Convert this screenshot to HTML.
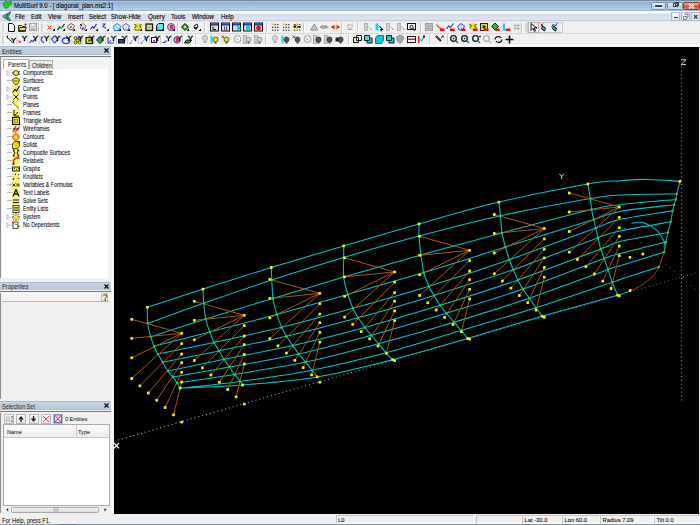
<!DOCTYPE html>
<html><head><meta charset="utf-8">
<style>
*{margin:0;padding:0;box-sizing:border-box}
html,body{width:700px;height:525px;overflow:hidden;background:#f0f0f0;font-family:"Liberation Sans",sans-serif;}
.mi,#ttxt{-webkit-text-stroke:0.12px #000}.ti,.sp{-webkit-text-stroke:0.06px #000}
.a{position:absolute}
#title{left:0;top:0;width:700px;height:10.5px;background:linear-gradient(#6f8aa6 0,#6f8aa6 0.8px,#a8c6e8 0.8px,#a8c6e8 1.6px,#91adcc 1.6px,#b4cfe9 9.5px,#98b5d5 10.5px);}
#ttxt{left:13.5px;top:1.2px;font-size:7.2px;color:#0c0c0c;white-space:nowrap;transform:scaleX(0.83);transform-origin:0 0}
#menu{left:0;top:10.5px;width:700px;height:10.5px;background:linear-gradient(#fff 0,#fff 1.5px,#e6eaf4 2.5px,#cfd9eb 4px,#d9e0f1 5px,#dfe4f3 9.5px,#c8ccd8 9.5px)}
.mi{position:absolute;top:12.7px;font-size:6.6px;color:#000;white-space:nowrap;transform:scaleX(0.93);transform-origin:0 0}
#tb{left:0;top:21px;width:700px;height:26px;background:#f0f0f0}
#view{left:114px;top:47px;width:585px;height:467px;background:#000}
.hdr{position:absolute;left:0;width:111px;height:8.8px;background:linear-gradient(#a8bacc 0,#a8bacc 0.8px,#c6d4e2 0.8px,#bccad8 7.6px,#a9bbce 8.8px);}
.htx{position:absolute;left:2px;top:1.6px;font-size:6.6px;color:#2a2a2a;white-space:nowrap;transform:scaleX(0.92);transform-origin:0 0}
.hx{position:absolute;left:104px;top:2px;width:5px;height:5px}
.ti{position:absolute;left:23px;font-size:6.3px;color:#000;white-space:nowrap;transform:scaleX(0.83);transform-origin:0 0;line-height:7px}
.ic{position:absolute;left:12px;width:8px;height:8px}
.ex{position:absolute;left:6.5px;width:0;height:0;border-left:2.5px solid #b8b8b8;border-top:2.5px solid transparent;border-bottom:2.5px solid transparent}
.dl{position:absolute;left:8px;width:4px;height:1px;border-top:1px dotted #a0a0a0}
.sp{position:absolute;top:515px;height:9px;border:1px solid #c4c4c4;border-right-color:#fafafa;border-bottom-color:#fafafa;font-size:5.8px;line-height:8px;padding-left:1.5px;color:#000;white-space:nowrap}
.btn{position:absolute;top:414px;width:10px;height:9.5px;background:linear-gradient(#fdfdfd,#e8e8e8);border:1px solid #b8b8b8}
</style></head><body>
<div class="a" id="title"></div>
<svg class="a" style="left:1px;top:0px" width="12" height="10"><path d="M2 3.5 L5 1 L7 2.5 L10 0.8 L10.5 4 L8 6.5 L5 8.8 L3.5 7 Z" fill="#18d018" stroke="#0a7a0a" stroke-width="0.7"/></svg>
<div class="a" id="ttxt">MultiSurf 9.0 - [ diagonal_plan.ms2:1]</div>
<!-- window buttons -->
<div class="a" style="left:650.5px;top:1.5px;width:15px;height:8px;border:0.8px solid #7890ac;border-radius:1.5px;background:linear-gradient(#e4eef8,#c8d8ea 50%,#b4c8de 51%,#d0e0f0)"></div>
<div class="a" style="left:655px;top:5.3px;width:6.5px;height:1.8px;background:#3c4450;box-shadow:0 0 0 0.6px #f4f8fc"></div>
<div class="a" style="left:666.5px;top:1.5px;width:16px;height:8px;border:0.8px solid #7890ac;border-radius:1.5px;background:linear-gradient(#e4eef8,#c8d8ea 50%,#b4c8de 51%,#d0e0f0)"></div>
<div class="a" style="left:672.5px;top:3px;width:5px;height:4px;border:1px solid #3c4450;border-top-width:1.5px"></div>
<div class="a" style="left:674.5px;top:2.2px;width:4px;height:3.5px;border:1px solid #3c4450;border-top-width:1.3px"></div>
<div class="a" style="left:683px;top:1.5px;width:17px;height:8px;border:0.8px solid #8a3a30;border-radius:1.5px;background:linear-gradient(#f0a898,#d86850 50%,#c84830 51%,#e08060)"></div>
<svg class="a" style="left:683px;top:1.5px" width="17" height="8"><path d="M6 2 L11 6.5 M11 2 L6 6.5" stroke="#fff" stroke-width="1.8"/><path d="M6 2 L11 6.5 M11 2 L6 6.5" stroke="#3a3a3a" stroke-width="0.6" opacity="0.5"/></svg>

<div class="a" id="menu"></div>
<svg class="a" style="left:2px;top:10.5px" width="10" height="11"><path d="M8.8 0.8 L2.5 4.2 L0.8 5.5 L2.5 6.8 L8.8 10.2 L6.2 5.5 Z" fill="#20e020" stroke="#5a2ab0" stroke-width="0.9"/><path d="M6 2.8 L4.2 5.5 L6 8.2" stroke="#1838d0" stroke-width="1" fill="none"/></svg>
<div class="mi" style="left:14.5px">File</div>
<div class="mi" style="left:31px">Edit</div>
<div class="mi" style="left:47.5px">View</div>
<div class="mi" style="left:67.5px">Insert</div>
<div class="mi" style="left:88.5px">Select</div>
<div class="mi" style="left:111px">Show-Hide</div>
<div class="mi" style="left:147.5px">Query</div>
<div class="mi" style="left:171px">Tools</div>
<div class="mi" style="left:192px">Window</div>
<div class="mi" style="left:221px">Help</div>
<!-- MDI buttons -->
<div class="a" style="left:671px;top:12px;width:9px;height:8.5px;border:0.8px solid #aab8cc;background:linear-gradient(#f6f8fc,#dfe6f2)"></div>
<div class="a" style="left:674px;top:17px;width:3.5px;height:1.2px;background:#333"></div>
<div class="a" style="left:681px;top:12px;width:9px;height:8.5px;border:0.8px solid #aab8cc;background:linear-gradient(#f6f8fc,#dfe6f2)"></div>
<svg class="a" style="left:681px;top:12px" width="9" height="9"><path d="M2.5 4.5h3v3h-3zM4 3v-1h3v3h-1" stroke="#666" stroke-width="0.8" fill="none"/></svg>
<div class="a" style="left:691px;top:12px;width:9px;height:8.5px;border:0.8px solid #aab8cc;background:linear-gradient(#f6f8fc,#dfe6f2)"></div>
<svg class="a" style="left:691px;top:12px" width="9" height="9"><path d="M3 3 L6.5 6.5 M6.5 3 L3 6.5" stroke="#333" stroke-width="1.1"/></svg>

<div class="a" id="tb"></div>
<svg class="a" style="left:0;top:0" width="700" height="47"><rect x="0.0" y="21.0" width="700.0" height="0.8" fill="#e4e8ee"/><rect x="0.0" y="33.0" width="700.0" height="1.0" fill="#d9d9d9"/><rect x="0.0" y="44.8" width="700.0" height="1.4" fill="#fdfdfd"/><rect x="2.5" y="23.5" width="1.2" height="8.0" fill="#b4b4b4"/><rect x="3.7" y="23.5" width="0.8" height="8.0" fill="#fcfcfc"/><rect x="41.5" y="23.5" width="1.2" height="8.0" fill="#b4b4b4"/><rect x="42.7" y="23.5" width="0.8" height="8.0" fill="#fcfcfc"/><rect x="2.5" y="35.5" width="1.2" height="9.0" fill="#b4b4b4"/><rect x="3.7" y="35.5" width="0.8" height="9.0" fill="#fcfcfc"/><rect x="525.5" y="23.5" width="1.2" height="8.0" fill="#b4b4b4"/><rect x="526.7" y="23.5" width="0.8" height="8.0" fill="#fcfcfc"/><rect x="38.0" y="22.5" width="1.0" height="10.0" fill="#c8c8c8"/><rect x="39.0" y="22.5" width="1.0" height="10.0" fill="#ffffff"/><rect x="177.0" y="22.5" width="1.0" height="10.0" fill="#c8c8c8"/><rect x="178.0" y="22.5" width="1.0" height="10.0" fill="#ffffff"/><rect x="204.0" y="22.5" width="1.0" height="10.0" fill="#c8c8c8"/><rect x="205.0" y="22.5" width="1.0" height="10.0" fill="#ffffff"/><rect x="266.0" y="22.5" width="1.0" height="10.0" fill="#c8c8c8"/><rect x="267.0" y="22.5" width="1.0" height="10.0" fill="#ffffff"/><rect x="303.0" y="22.5" width="1.0" height="10.0" fill="#c8c8c8"/><rect x="304.0" y="22.5" width="1.0" height="10.0" fill="#ffffff"/><rect x="341.0" y="22.5" width="1.0" height="10.0" fill="#c8c8c8"/><rect x="342.0" y="22.5" width="1.0" height="10.0" fill="#ffffff"/><rect x="357.0" y="22.5" width="1.0" height="10.0" fill="#c8c8c8"/><rect x="358.0" y="22.5" width="1.0" height="10.0" fill="#ffffff"/><rect x="420.0" y="22.5" width="1.0" height="10.0" fill="#c8c8c8"/><rect x="421.0" y="22.5" width="1.0" height="10.0" fill="#ffffff"/><rect x="521.0" y="22.5" width="1.0" height="10.0" fill="#c8c8c8"/><rect x="522.0" y="22.5" width="1.0" height="10.0" fill="#ffffff"/><rect x="527.5" y="22.5" width="35.0" height="10.0" fill="none" stroke="#c0c0c0" stroke-width="0.8"/><rect x="528.5" y="22.8" width="10.0" height="9.5" fill="#f8f8f8" stroke="#a0a0a0" stroke-width="0.7"/><path d="M8.5 23.5h4l2 2v6h-6z" stroke="#111" stroke-width="1" fill="#fff"/><path d="M18.5 25.5h3l1 1h3v5h-7z" stroke="#333" stroke-width="1" fill="#e8d040"/><path d="M18.5 30.5l1.5 -3h6.5l-1.5 3z" stroke="#333" stroke-width="1" fill="#f4e060"/><circle cx="25.5" cy="24.5" r="1.0" fill="#222"/><rect x="29.5" y="23.5" width="7.0" height="7.0" fill="#e4e4e4" stroke="#9a9a9a" stroke-width="1"/><rect x="31.0" y="23.8" width="4.0" height="2.5" fill="#fafafa" stroke="#a8a8a8" stroke-width="0.6"/><rect x="31.0" y="28.0" width="4.0" height="2.5" fill="#b8b8b8"/><path d="M47.5 25.5l4 4m0 -4l-4 4" stroke="#e02020" stroke-width="1" fill="none"/><path d="M52.5 31.0h2.5v-2.5z" stroke="none" stroke-width="1" fill="#000"/><path d="M57.5 30.0l2 -3l2 1l3 -4" stroke="#111" stroke-width="1.1" fill="none"/><circle cx="61.2" cy="27.8" r="1.2" fill="#20d020"/><path d="M62.5 31.0h2.5v-2.5z" stroke="none" stroke-width="1" fill="#000"/><path d="M67.5 26.0l3.5 -2.5l3.5 2l-2 4.5l-4 -1z" stroke="#555" stroke-width="0.9" fill="#f4f4f4"/><circle cx="70.8" cy="27.0" r="1.1" fill="#e02020"/><path d="M72.5 31.0h2.5v-2.5z" stroke="none" stroke-width="1" fill="#000"/><path d="M80.0 25.5l3 -2l3 2.5l-1.5 4l-3.5 -1z" stroke="#666" stroke-width="0.9" fill="#f0f0f0"/><path d="M80.0 24.0l2 2" stroke="#111" stroke-width="1" fill="none"/><circle cx="83.0" cy="28.0" r="1.2" fill="#e020e0"/><path d="M84.5 31.0h2.5v-2.5z" stroke="none" stroke-width="1" fill="#000"/><path d="M90.5 29.5l2 -3l1.5 1.5l2.5 -4" stroke="#2020e0" stroke-width="1.1" fill="none"/><path d="M95.5 31.0h2.5v-2.5z" stroke="none" stroke-width="1" fill="#000"/><path d="M102.5 24.0h2.5l-2 2.5l3 2" stroke="#2030d0" stroke-width="1.1" fill="none"/><path d="M104.5 25.0l2 2" stroke="#c0c040" stroke-width="0.8" fill="none"/><path d="M106.5 31.0h2.5v-2.5z" stroke="none" stroke-width="1" fill="#000"/><path d="M113.5 26.0l3.5 -2.5l3.5 2.5l-1 4l-5 1z" stroke="#2060ff" stroke-width="0.9" fill="#e0f4f8"/><path d="M115.0 25.0l4 4" stroke="#00c0e0" stroke-width="0.8" fill="none"/><path d="M118.5 31.0h2.5v-2.5z" stroke="none" stroke-width="1" fill="#000"/><path d="M122.5 26.0l3.5 -2.5l3.5 2.5l-1.5 4h-4z" stroke="#3040e0" stroke-width="0.9" fill="#f4f4fa"/><path d="M124.5 26.5l1.5 2l1.5 -2" stroke="#b0b0b0" stroke-width="0.6" fill="none"/><path d="M127.5 31.0h2.5v-2.5z" stroke="none" stroke-width="1" fill="#000"/><rect x="134.5" y="23.5" width="7.0" height="7.0" fill="#e8e020"/><path d="M134.5 24.0l2 2l-2 2m7 -4l-2 2l2 2M134.5 29.0l2 2m3 -2l-2 2" stroke="#222" stroke-width="0.9" fill="none"/><path d="M139.5 31.0h2.5v-2.5z" stroke="none" stroke-width="1" fill="#000"/><rect x="146.0" y="24.0" width="6.5" height="6.5" fill="#f0f000" stroke="#111" stroke-width="1.3"/><rect x="148.0" y="26.0" width="2.5" height="2.5" fill="#b0b0e0"/><path d="M150.5 31.0h2.5v-2.5z" stroke="none" stroke-width="1" fill="#000"/><path d="M156.5 25.5h5v5h-5z" stroke="#111" stroke-width="1" fill="#10d8e0"/><path d="M156.5 25.5l2 -2h5v5l-2 2" stroke="#111" stroke-width="1" fill="#60e8f0"/><path d="M161.5 31.0h2.5v-2.5z" stroke="none" stroke-width="1" fill="#000"/><circle cx="171.0" cy="27.0" r="3.5" fill="#e8a0c0" stroke="#3040d0" stroke-width="0.9"/><rect x="170.0" y="25.0" width="3.0" height="4.0" fill="#e03030"/><path d="M172.5 31.0h2.5v-2.5z" stroke="none" stroke-width="1" fill="#000"/><path d="M181.5 27.0l3.5 -3.5l3.5 3.5l-3.5 3.5z" stroke="#111" stroke-width="1" fill="#20c020"/><circle cx="185.0" cy="27.0" r="1.0" fill="#f0f0f0"/><path d="M186.5 31.0h2.5v-2.5z" stroke="none" stroke-width="1" fill="#000"/><path d="M194.0 26.0l3 -2l1 3l-3 2z" stroke="#111" stroke-width="1" fill="#fff"/><circle cx="196.0" cy="28.0" r="1.2" fill="#111"/><path d="M198.5 31.0h2.5v-2.5z" stroke="none" stroke-width="1" fill="#000"/><rect x="210.5" y="23.0" width="8.0" height="8.0" fill="#d8d8d8" stroke="#111" stroke-width="1"/><rect x="211.0" y="23.5" width="7.0" height="2.0" fill="#2040c0"/><path d="M213.0 26.5v3h3" stroke="#111" stroke-width="1" fill="none"/><rect x="221.5" y="23.0" width="8.0" height="8.0" fill="#d8d8d8" stroke="#111" stroke-width="1"/><rect x="222.0" y="23.5" width="7.0" height="2.0" fill="#2040c0"/><path d="M224.5 26.5v4m2 -4v4" stroke="#555" stroke-width="1" fill="none"/><rect x="232.5" y="23.0" width="8.0" height="8.0" fill="#d8d8d8" stroke="#111" stroke-width="1"/><rect x="233.0" y="23.5" width="7.0" height="2.0" fill="#2040c0"/><path d="M237.0 25.5l3 3h-2l1 2" stroke="#00c0e0" stroke-width="1.6" fill="none"/><rect x="243.5" y="23.0" width="8.0" height="8.0" fill="#d8d8d8" stroke="#111" stroke-width="1"/><rect x="244.0" y="23.5" width="7.0" height="2.0" fill="#2040c0"/><rect x="246.0" y="26.0" width="4.0" height="4.0" fill="#10d0e0"/><rect x="254.5" y="23.0" width="8.0" height="8.0" fill="#d8d8d8" stroke="#111" stroke-width="1"/><rect x="255.0" y="23.5" width="7.0" height="2.0" fill="#2040c0"/><circle cx="258.5" cy="28.0" r="2.4" fill="#e01010"/><rect x="272.0" y="24.0" width="1.2" height="1.2" fill="#e0d020"/><rect x="274.6" y="24.0" width="1.2" height="1.2" fill="#222"/><rect x="277.2" y="24.0" width="1.2" height="1.2" fill="#222"/><rect x="272.0" y="26.8" width="1.2" height="1.2" fill="#222"/><rect x="274.6" y="26.8" width="1.2" height="1.2" fill="#222"/><rect x="277.2" y="26.8" width="1.2" height="1.2" fill="#222"/><rect x="272.0" y="29.6" width="1.2" height="1.2" fill="#222"/><rect x="274.6" y="29.6" width="1.2" height="1.2" fill="#222"/><rect x="277.2" y="29.6" width="1.2" height="1.2" fill="#222"/><rect x="271.5" y="23.5" width="2.0" height="2.0" fill="#e0d020"/><rect x="283.0" y="24.0" width="1.2" height="1.2" fill="#e0d020"/><rect x="285.6" y="24.0" width="1.2" height="1.2" fill="#222"/><rect x="288.2" y="24.0" width="1.2" height="1.2" fill="#222"/><rect x="283.0" y="26.8" width="1.2" height="1.2" fill="#222"/><rect x="285.6" y="26.8" width="1.2" height="1.2" fill="#222"/><rect x="288.2" y="26.8" width="1.2" height="1.2" fill="#222"/><rect x="283.0" y="29.6" width="1.2" height="1.2" fill="#222"/><rect x="285.6" y="29.6" width="1.2" height="1.2" fill="#222"/><rect x="288.2" y="29.6" width="1.2" height="1.2" fill="#222"/><rect x="282.5" y="23.5" width="2.0" height="2.0" fill="#e0d020"/><rect x="294.0" y="24.0" width="1.2" height="1.2" fill="#333"/><rect x="296.6" y="24.0" width="1.2" height="1.2" fill="#333"/><rect x="299.2" y="24.0" width="1.2" height="1.2" fill="#333"/><rect x="294.0" y="26.8" width="1.2" height="1.2" fill="#333"/><rect x="296.6" y="26.8" width="1.2" height="1.2" fill="#333"/><rect x="299.2" y="26.8" width="1.2" height="1.2" fill="#333"/><rect x="294.0" y="29.6" width="1.2" height="1.2" fill="#333"/><rect x="296.6" y="29.6" width="1.2" height="1.2" fill="#333"/><rect x="299.2" y="29.6" width="1.2" height="1.2" fill="#333"/><rect x="293.5" y="26.0" width="7.0" height="1.5" fill="#111"/><rect x="296.0" y="23.5" width="1.5" height="7.0" fill="#e0d020"/><rect x="293.5" y="24.0" width="2.5" height="2.0" fill="#f04020"/><path d="M310.5 30.0l4 -6l3 6z" stroke="#888" stroke-width="1" fill="#c8c8c8"/><path d="M320.5 27.0h8m-8 0l2.5 -2m-2.5 2l2.5 2m1 -4v4m2 -4v4" stroke="#888" stroke-width="1" fill="none"/><path d="M331.5 27.0h8" stroke="#e02020" stroke-width="1.5" fill="none"/><path d="M331.5 27.0l3 -2.5v5z M339.5 27.0l-3 -2.5v5z" stroke="none" stroke-width="1" fill="#e02020"/><circle cx="335.5" cy="27.0" r="1.3" fill="#e8e020"/><path d="M347.0 25.0h6M347.0 26.0l3 3l3 -3M347.0 29.5h6" stroke="#aaa" stroke-width="0.9" fill="none"/><rect x="364.5" y="23.5" width="3.0" height="7.0" fill="#d0d0d0" stroke="#aaa" stroke-width="0.8"/><path d="M368.5 26.5l3 3h-1.5" stroke="#aaa" stroke-width="1" fill="none"/><rect x="375.5" y="23.5" width="3.0" height="7.0" fill="#10d8e0"/><path d="M379.5 26.0l3 3.5h-1.8l1 1.8" stroke="#111" stroke-width="1.1" fill="none"/><rect x="386.5" y="23.5" width="3.0" height="7.0" fill="#d0d0d0" stroke="#aaa" stroke-width="0.8"/><path d="M390.5 26.5l3 3h-1.5" stroke="#aaa" stroke-width="1" fill="none"/><rect x="397.5" y="23.5" width="3.0" height="7.0" fill="#d0d0d0" stroke="#aaa" stroke-width="0.8"/><path d="M401.5 26.5l3 3h-1.5" stroke="#aaa" stroke-width="1" fill="none"/><rect x="407.5" y="23.5" width="8.0" height="6.0" fill="#fff" stroke="#111" stroke-width="1"/><circle cx="411.5" cy="27.0" r="1.6" fill="none" stroke="#111" stroke-width="1"/><path d="M413.0 28.5l2 2" stroke="#111" stroke-width="1.2" fill="none"/><rect x="425.5" y="23.5" width="7.0" height="7.0" fill="#c8c8c8" stroke="#a0a0a0" stroke-width="1"/><path d="M425.5 26.0h7M425.5 28.5h7M428.0 23.5v7M430.5 23.5v7" stroke="#999" stroke-width="0.6" fill="none"/><path d="M436.5 24.5l3 3.5l2 0.5" stroke="#e02020" stroke-width="1.1" fill="none"/><rect x="440.0" y="28.5" width="4.5" height="2.5" fill="#f01010"/><path d="M446.5 29.0l2 -3l2 1.5l3 -4" stroke="#2030e0" stroke-width="1.1" fill="none"/><rect x="450.0" y="28.5" width="4.5" height="2.5" fill="#f01010"/><path d="M457.5 26.5l3.5 -3l3.5 2.5l-1.5 4h-4z" stroke="#3040e0" stroke-width="1" fill="#d8d8f0"/><rect x="461.0" y="28.5" width="4.5" height="2.5" fill="#f01010"/><rect x="469.5" y="23.5" width="7.0" height="6.5" fill="#e8e020"/><path d="M469.5 24.0l2 2l-2 2m7 -4l-2 2l2 2" stroke="#222" stroke-width="0.9" fill="none"/><rect x="473.0" y="28.5" width="4.5" height="2.5" fill="#f01010"/><rect x="480.5" y="23.5" width="7.0" height="7.0" fill="#e8e020" stroke="#222" stroke-width="1"/><rect x="482.5" y="25.5" width="3.0" height="3.0" fill="#222"/><rect x="484.0" y="28.5" width="4.5" height="2.5" fill="#f01010"/><path d="M491.5 26.5l3.5 -3.5l3.5 3.5l-3.5 3.5z" stroke="#111" stroke-width="1" fill="#20c020"/><rect x="495.0" y="28.5" width="4.5" height="2.5" fill="#f01010"/><rect x="503.0" y="23.5" width="2.0" height="7.0" fill="#10d0e0"/><rect x="503.0" y="29.0" width="4.0" height="1.5" fill="#10d0e0"/><rect x="506.0" y="28.5" width="4.5" height="2.5" fill="#f01010"/><path d="M515.0 23.5v7m3 -7v7M513.5 25.5h7m-7 3h7" stroke="#b0b0b0" stroke-width="1" fill="none"/><path d="M531.0 23.5v7l2 -2l1.5 3l1 -0.5l-1.5 -3h3z" stroke="#111" stroke-width="1" fill="#fff"/><path d="M540.5 23.5l3 3m0 -3l-3 3" stroke="#e02020" stroke-width="1" fill="none"/><path d="M542.5 26.0l3 2l-1 3l-3 -2z" stroke="#111" stroke-width="1" fill="#20c0c0"/><path d="M551.5 27.0l2 -3l2 2l2 -3" stroke="#2020e0" stroke-width="1" fill="none"/><path d="M553.5 26.0l3 2l-1 3l-3 -2z" stroke="#111" stroke-width="1" fill="#20c0c0"/><rect x="5.0" y="34.5" width="190.0" height="10.5" fill="#f6f6f6"/><rect x="16.5" y="35.0" width="1.0" height="9.5" fill="#c8c8c8"/><rect x="27.5" y="35.0" width="1.0" height="9.5" fill="#c8c8c8"/><rect x="38.6" y="35.0" width="1.0" height="9.5" fill="#c8c8c8"/><rect x="49.5" y="35.0" width="1.0" height="9.5" fill="#c8c8c8"/><rect x="60.5" y="35.0" width="1.0" height="9.5" fill="#c8c8c8"/><rect x="71.4" y="35.0" width="1.0" height="9.5" fill="#c8c8c8"/><rect x="82.3" y="35.0" width="1.0" height="9.5" fill="#c8c8c8"/><rect x="93.7" y="35.0" width="1.0" height="9.5" fill="#c8c8c8"/><rect x="105.0" y="35.0" width="1.0" height="9.5" fill="#c8c8c8"/><rect x="116.0" y="35.0" width="1.0" height="9.5" fill="#c8c8c8"/><rect x="127.0" y="35.0" width="1.0" height="9.5" fill="#c8c8c8"/><rect x="138.0" y="35.0" width="1.0" height="9.5" fill="#c8c8c8"/><rect x="149.0" y="35.0" width="1.0" height="9.5" fill="#c8c8c8"/><rect x="160.0" y="35.0" width="1.0" height="9.5" fill="#c8c8c8"/><rect x="171.0" y="35.0" width="1.0" height="9.5" fill="#c8c8c8"/><rect x="182.0" y="35.0" width="1.0" height="9.5" fill="#c8c8c8"/><rect x="195.0" y="34.5" width="1.0" height="10.0" fill="#c8c8c8"/><rect x="196.0" y="34.5" width="1.0" height="10.0" fill="#ffffff"/><rect x="265.0" y="34.5" width="1.0" height="10.0" fill="#c8c8c8"/><rect x="266.0" y="34.5" width="1.0" height="10.0" fill="#ffffff"/><rect x="348.0" y="34.5" width="1.0" height="10.0" fill="#c8c8c8"/><rect x="349.0" y="34.5" width="1.0" height="10.0" fill="#ffffff"/><rect x="429.0" y="34.5" width="1.0" height="10.0" fill="#c8c8c8"/><rect x="430.0" y="34.5" width="1.0" height="10.0" fill="#ffffff"/><rect x="447.0" y="34.5" width="1.0" height="10.0" fill="#c8c8c8"/><rect x="448.0" y="34.5" width="1.0" height="10.0" fill="#ffffff"/><path d="M7.5 35.5v3M6.5 36.5l6 6" stroke="#222" stroke-width="1" fill="none"/><path d="M10.5 37.8h1.6l1.4 2l1.4 -2h1.6l-2.3 3v2.5h-1.4v-2.5z" stroke="none" stroke-width="1" fill="#111"/><path d="M11.2 38.2l1.3 1.8" stroke="#2070f0" stroke-width="1" fill="none"/><path d="M18.5 40.5l2.5 2.5m0 -2.5l-2.5 2.5" stroke="#e02020" stroke-width="1" fill="none"/><path d="M21.5 35.8h1.6l1.4 2l1.4 -2h1.6l-2.3 3v2.5h-1.4v-2.5z" stroke="none" stroke-width="1" fill="#111"/><path d="M22.2 36.2l1.3 1.8" stroke="#2070f0" stroke-width="1" fill="none"/><path d="M29.5 43.0l2 -2.5l1.5 1l2.5 -3" stroke="#2040e0" stroke-width="1.2" fill="none"/><path d="M32.5 35.8h1.6l1.4 2l1.4 -2h1.6l-2.3 3v2.5h-1.4v-2.5z" stroke="none" stroke-width="1" fill="#111"/><path d="M33.2 36.2l1.3 1.8" stroke="#2070f0" stroke-width="1" fill="none"/><path d="M40.5 37.0h2l-1.5 3l3 3" stroke="#3040e0" stroke-width="1.2" fill="none"/><path d="M43.5 35.8h1.6l1.4 2l1.4 -2h1.6l-2.3 3v2.5h-1.4v-2.5z" stroke="none" stroke-width="1" fill="#111"/><path d="M44.2 36.2l1.3 1.8" stroke="#2070f0" stroke-width="1" fill="none"/><path d="M51.5 39.0l3 -3l2 1l1 3l-3 3z" stroke="#3040e0" stroke-width="1.1" fill="none"/><path d="M54.5 35.8h1.6l1.4 2l1.4 -2h1.6l-2.3 3v2.5h-1.4v-2.5z" stroke="none" stroke-width="1" fill="#111"/><path d="M55.2 36.2l1.3 1.8" stroke="#2070f0" stroke-width="1" fill="none"/><ellipse cx="66.0" cy="40.8" rx="3.6" ry="2.8" fill="#fff" stroke="#2040f0" stroke-width="1.3"/><path d="M65.5 35.8h1.6l1.4 2l1.4 -2h1.6l-2.3 3v2.5h-1.4v-2.5z" stroke="none" stroke-width="1" fill="#111"/><path d="M66.2 36.2l1.3 1.8" stroke="#2070f0" stroke-width="1" fill="none"/><circle cx="75.5" cy="38.0" r="1.5" fill="#f0f000" stroke="#111" stroke-width="0.7"/><circle cx="79.5" cy="38.0" r="1.5" fill="#f0f000" stroke="#111" stroke-width="0.7"/><circle cx="77.5" cy="40.5" r="1.5" fill="#f0f000" stroke="#111" stroke-width="0.7"/><circle cx="75.5" cy="42.5" r="1.5" fill="#f0f000" stroke="#111" stroke-width="0.7"/><circle cx="79.5" cy="42.5" r="1.5" fill="#f0f000" stroke="#111" stroke-width="0.7"/><path d="M77.5 35.8h1.6l1.4 2l1.4 -2h1.6l-2.3 3v2.5h-1.4v-2.5z" stroke="none" stroke-width="1" fill="#111"/><path d="M78.2 36.2l1.3 1.8" stroke="#2070f0" stroke-width="1" fill="none"/><rect x="86.0" y="37.5" width="6.5" height="6.0" fill="#f0f000" stroke="#111" stroke-width="1.2"/><rect x="88.0" y="39.5" width="2.5" height="2.0" fill="#2050c0"/><path d="M88.5 35.8h1.6l1.4 2l1.4 -2h1.6l-2.3 3v2.5h-1.4v-2.5z" stroke="none" stroke-width="1" fill="#111"/><path d="M89.2 36.2l1.3 1.8" stroke="#2070f0" stroke-width="1" fill="none"/><path d="M96.5 40.0l3.5 -3.5l3.5 3.5l-3.5 3.5z" stroke="#111" stroke-width="1" fill="#20c020"/><path d="M99.5 35.8h1.6l1.4 2l1.4 -2h1.6l-2.3 3v2.5h-1.4v-2.5z" stroke="none" stroke-width="1" fill="#111"/><path d="M100.2 36.2l1.3 1.8" stroke="#2070f0" stroke-width="1" fill="none"/><path d="M108.0 37.0v6h6" stroke="#2040e0" stroke-width="1.1" fill="none"/><path d="M108.0 43.0l3 -3" stroke="#2040e0" stroke-width="1" fill="none"/><path d="M110.5 35.8h1.6l1.4 2l1.4 -2h1.6l-2.3 3v2.5h-1.4v-2.5z" stroke="none" stroke-width="1" fill="#111"/><path d="M111.2 36.2l1.3 1.8" stroke="#2070f0" stroke-width="1" fill="none"/><rect x="118.5" y="39.5" width="6.0" height="3.5" fill="#444" stroke="#111" stroke-width="1"/><rect x="119.5" y="40.5" width="4.0" height="1.5" fill="#2040e0"/><path d="M121.5 35.8h1.6l1.4 2l1.4 -2h1.6l-2.3 3v2.5h-1.4v-2.5z" stroke="none" stroke-width="1" fill="#111"/><path d="M122.2 36.2l1.3 1.8" stroke="#2070f0" stroke-width="1" fill="none"/><path d="M129.5 43.0h2M131.5 41.0h1M133.0 39.0h2" stroke="#2040e0" stroke-width="1.2" fill="none"/><path d="M132.5 35.8h1.6l1.4 2l1.4 -2h1.6l-2.3 3v2.5h-1.4v-2.5z" stroke="none" stroke-width="1" fill="#111"/><path d="M133.2 36.2l1.3 1.8" stroke="#2070f0" stroke-width="1" fill="none"/><path d="M140.5 43.0h2M142.5 41.0h1M144.0 39.0h2" stroke="#2040e0" stroke-width="1.2" fill="none"/><path d="M143.5 35.8h1.6l1.4 2l1.4 -2h1.6l-2.3 3v2.5h-1.4v-2.5z" stroke="none" stroke-width="1" fill="#111"/><path d="M144.2 36.2l1.3 1.8" stroke="#2070f0" stroke-width="1" fill="none"/><rect x="151.5" y="37.5" width="5.0" height="5.0" fill="#fff" stroke="#111" stroke-width="1"/><rect x="153.0" y="40.0" width="2.0" height="2.5" fill="#e020e0"/><path d="M154.5 35.8h1.6l1.4 2l1.4 -2h1.6l-2.3 3v2.5h-1.4v-2.5z" stroke="none" stroke-width="1" fill="#111"/><path d="M155.2 36.2l1.3 1.8" stroke="#2070f0" stroke-width="1" fill="none"/><path d="M162.5 42.5h2l2 -2" stroke="#2040e0" stroke-width="1.2" fill="none"/><path d="M165.5 35.8h1.6l1.4 2l1.4 -2h1.6l-2.3 3v2.5h-1.4v-2.5z" stroke="none" stroke-width="1" fill="#111"/><path d="M166.2 36.2l1.3 1.8" stroke="#2070f0" stroke-width="1" fill="none"/><circle cx="177.0" cy="40.0" r="3.2" fill="#e890b0" stroke="#3040d0" stroke-width="1"/><rect x="176.0" y="38.0" width="2.5" height="4.0" fill="#e03030"/><path d="M176.5 35.8h1.6l1.4 2l1.4 -2h1.6l-2.3 3v2.5h-1.4v-2.5z" stroke="none" stroke-width="1" fill="#111"/><path d="M177.2 36.2l1.3 1.8" stroke="#2070f0" stroke-width="1" fill="none"/><path d="M184.5 43.0l2 -3h5l-2 3z" stroke="#111" stroke-width="1" fill="#20c020"/><path d="M187.5 35.8h1.6l1.4 2l1.4 -2h1.6l-2.3 3v2.5h-1.4v-2.5z" stroke="none" stroke-width="1" fill="#111"/><path d="M188.2 36.2l1.3 1.8" stroke="#2070f0" stroke-width="1" fill="none"/><path d="M205.0 35.5c-3 0 -3 4 -1 5v2h2v-2c2 -1 2 -5 -1 -5z" stroke="#999" stroke-width="0.9" fill="#d8d8d8"/><rect x="210.5" y="35.5" width="2.0" height="8.0" fill="#20d8e0"/><circle cx="215.5" cy="39.5" r="2.5" fill="#e8e020" stroke="#333" stroke-width="0.8"/><rect x="214.6" y="42.0" width="1.8" height="1.5" fill="#333"/><path d="M221.5 35.5l2.5 2.5m0 -2.5l-2.5 2.5" stroke="#e02020" stroke-width="1" fill="none"/><circle cx="226.5" cy="39.5" r="2.5" fill="#e8e020" stroke="#333" stroke-width="0.8"/><rect x="225.6" y="42.0" width="1.8" height="1.5" fill="#333"/><circle cx="237.5" cy="39.0" r="3.5" fill="none" stroke="#a0a0a0" stroke-width="1"/><path d="M236.0 38.0l2 2" stroke="#a0a0a0" stroke-width="1" fill="none"/><rect x="243.5" y="35.5" width="3.0" height="8.0" fill="#d0d0d0" stroke="#a0a0a0" stroke-width="0.8"/><circle cx="248.5" cy="39.5" r="2.5" fill="#d0d0d0" stroke="#888" stroke-width="0.8"/><rect x="247.6" y="42.0" width="1.8" height="1.5" fill="#333"/><rect x="254.5" y="35.5" width="3.0" height="8.0" fill="#d0d0d0" stroke="#a0a0a0" stroke-width="0.8"/><circle cx="259.5" cy="39.5" r="2.5" fill="#d0d0d0" stroke="#888" stroke-width="0.8"/><rect x="258.6" y="42.0" width="1.8" height="1.5" fill="#333"/><path d="M275.0 35.5c-3 0 -3 4 -1 5v2h2v-2c2 -1 2 -5 -1 -5z" stroke="#999" stroke-width="0.9" fill="#d8d8d8"/><rect x="281.5" y="35.5" width="2.0" height="8.0" fill="#20d8e0"/><circle cx="286.5" cy="39.5" r="2.5" fill="#555" stroke="#333" stroke-width="0.8"/><rect x="285.6" y="42.0" width="1.8" height="1.5" fill="#333"/><path d="M292.5 35.5l2.5 2.5m0 -2.5l-2.5 2.5" stroke="#e02020" stroke-width="1" fill="none"/><circle cx="297.5" cy="39.5" r="2.5" fill="#555" stroke="#333" stroke-width="0.8"/><rect x="296.6" y="42.0" width="1.8" height="1.5" fill="#333"/><circle cx="307.5" cy="39.0" r="3.5" fill="none" stroke="#a0a0a0" stroke-width="1"/><path d="M306.0 38.0l2 2" stroke="#a0a0a0" stroke-width="1" fill="none"/><rect x="313.5" y="35.5" width="3.0" height="8.0" fill="#d0d0d0" stroke="#a0a0a0" stroke-width="0.8"/><circle cx="318.5" cy="39.5" r="2.5" fill="#555" stroke="#222" stroke-width="0.8"/><rect x="317.6" y="42.0" width="1.8" height="1.5" fill="#333"/><rect x="324.5" y="35.5" width="3.0" height="8.0" fill="#d0d0d0" stroke="#a0a0a0" stroke-width="0.8"/><circle cx="329.5" cy="39.5" r="2.5" fill="#555" stroke="#222" stroke-width="0.8"/><rect x="328.6" y="42.0" width="1.8" height="1.5" fill="#333"/><rect x="335.5" y="37.5" width="3.0" height="4.0" fill="#222"/><circle cx="340.5" cy="39.5" r="2.5" fill="#555" stroke="#111" stroke-width="0.8"/><rect x="339.6" y="42.0" width="1.8" height="1.5" fill="#333"/><path d="M353.5 37.5h5v5h-5zM356.5 35.5h5v5h-5z" stroke="#111" stroke-width="1" fill="none"/><path d="M367.0 38.0h5v5h-5z" stroke="#111" stroke-width="1" fill="#10d8e0"/><path d="M364.5 35.5h5v5h-5z" stroke="#111" stroke-width="1" fill="#40e0e8"/><path d="M375.5 38.0l2 -2.5h6v5l-2 3h-6z" stroke="#008890" stroke-width="1" fill="#10c8d0"/><path d="M389.0 38.0h5v5h-5z" stroke="#111" stroke-width="1" fill="#10d8e0"/><path d="M386.5 35.5h5v5h-5z" stroke="#111" stroke-width="1" fill="#10d8e0"/><path d="M396.5 37.0l3.5 -2l3.5 2l-1 4l-2.5 2.5l-2.5 -2.5z" stroke="#888" stroke-width="1" fill="#a8a8a8"/><rect x="407.5" y="36.5" width="8.0" height="6.0" fill="#fff" stroke="#111" stroke-width="1"/><rect x="408.0" y="38.5" width="7.0" height="1.5" fill="#e02020"/><rect x="418.0" y="36.0" width="1.5" height="7.0" fill="#e02020"/><path d="M419.0 39.0l2.5 2l2.5 -4" stroke="#10d0e0" stroke-width="1.5" fill="none"/><rect x="423.0" y="35.5" width="2.0" height="2.0" fill="#111"/><path d="M436.0 36.0l5 5" stroke="#111" stroke-width="2" fill="none"/><path d="M436.5 36.0l4 4" stroke="#10a0e0" stroke-width="1" fill="none"/><path d="M441.0 38.0l2 -2m-1 0h1.5v1.5" stroke="#111" stroke-width="0.8" fill="none"/><circle cx="453.5" cy="38.5" r="2.8" fill="#fff" stroke="#111" stroke-width="1.3"/><path d="M455.5 40.5l2.5 2.5" stroke="#1080c0" stroke-width="1.6" fill="none"/><circle cx="453.5" cy="38.5" r="1.0" fill="#333"/><circle cx="464.5" cy="38.5" r="2.8" fill="#fff" stroke="#111" stroke-width="1.3"/><path d="M466.5 40.5l2.5 2.5" stroke="#1080c0" stroke-width="1.6" fill="none"/><circle cx="464.5" cy="38.5" r="1.0" fill="#333"/><circle cx="475.5" cy="38.5" r="2.8" fill="#fff" stroke="#111" stroke-width="1.3"/><path d="M477.5 40.5l2.5 2.5" stroke="#1080c0" stroke-width="1.6" fill="none"/><path d="M479.0 36.5h2m-1 -1v2" stroke="#111" stroke-width="0.8" fill="none"/><circle cx="486.5" cy="38.5" r="2.8" fill="#f4f4f4" stroke="#b0b0b0" stroke-width="1.3"/><path d="M488.5 40.5l2.5 2.5" stroke="#bbb" stroke-width="1.6" fill="none"/><path d="M495.0 39.5a3.3 3.3 0 0 1 6 -1.5M502.0 39.5a3.3 3.3 0 0 1 -6 1.5" stroke="#111" stroke-width="1.3" fill="none"/><path d="M509.5 35.5v8M505.5 39.5h8" stroke="#111" stroke-width="1.6" fill="none"/></svg>
<div class="a" id="view"></div>
<div class="a" style="left:699px;top:47px;width:1px;height:467px;background:#e8e8e8"></div>
<div class="a" style="left:111px;top:46px;width:3px;height:468px;background:#f4f4f4"></div>
<svg class="a" style="left:0;top:0" width="700" height="525" viewBox="0 0 700 525"><rect x="118.1" y="439.4" width="1" height="1" fill="#d7d7d7"/><rect x="121.9" y="438.3" width="1" height="1" fill="#d6d6d6"/><rect x="125.7" y="437.2" width="1" height="1" fill="#d5d5d5"/><rect x="129.6" y="436.1" width="1" height="1" fill="#d4d4d4"/><rect x="133.4" y="435.0" width="1" height="1" fill="#d3d3d3"/><rect x="137.2" y="433.9" width="1" height="1" fill="#d3d2d2"/><rect x="141.0" y="432.8" width="1" height="1" fill="#d2d1d1"/><rect x="144.8" y="431.7" width="1" height="1" fill="#d1d0d0"/><rect x="148.6" y="430.6" width="1" height="1" fill="#d0cfcf"/><rect x="152.5" y="429.5" width="1" height="1" fill="#cfcece"/><rect x="156.3" y="428.4" width="1" height="1" fill="#cfcdcd"/><rect x="160.1" y="427.3" width="1" height="1" fill="#cecccc"/><rect x="163.9" y="426.2" width="1" height="1" fill="#cdcbcb"/><rect x="167.7" y="425.0" width="1" height="1" fill="#cccaca"/><rect x="171.5" y="423.9" width="1" height="1" fill="#cbc9c9"/><rect x="175.4" y="422.8" width="1" height="1" fill="#cbc8c8"/><rect x="179.2" y="421.7" width="1" height="1" fill="#cac7c7"/><rect x="183.0" y="420.6" width="1" height="1" fill="#c9c6c6"/><rect x="186.8" y="419.5" width="1" height="1" fill="#c8c5c5"/><rect x="190.6" y="418.4" width="1" height="1" fill="#c7c5c5"/><rect x="194.4" y="417.3" width="1" height="1" fill="#c7c4c4"/><rect x="198.3" y="416.2" width="1" height="1" fill="#c6c3c3"/><rect x="202.1" y="415.1" width="1" height="1" fill="#c5c2c2"/><rect x="205.9" y="414.0" width="1" height="1" fill="#c4c1c1"/><rect x="209.7" y="412.9" width="1" height="1" fill="#c3c0c0"/><rect x="213.5" y="411.8" width="1" height="1" fill="#c3bfbf"/><rect x="217.3" y="410.7" width="1" height="1" fill="#c2bebe"/><rect x="221.2" y="409.6" width="1" height="1" fill="#c1bdbd"/><rect x="225.0" y="408.5" width="1" height="1" fill="#c0bcbc"/><rect x="228.8" y="407.4" width="1" height="1" fill="#bfbbbb"/><rect x="232.6" y="406.3" width="1" height="1" fill="#bfbaba"/><rect x="236.4" y="405.2" width="1" height="1" fill="#beb9b9"/><rect x="240.3" y="404.1" width="1" height="1" fill="#bdb8b8"/><rect x="244.1" y="403.0" width="1" height="1" fill="#bcb7b7"/><rect x="247.9" y="401.9" width="1" height="1" fill="#bbb6b6"/><rect x="251.7" y="400.8" width="1" height="1" fill="#bbb5b5"/><rect x="255.5" y="399.7" width="1" height="1" fill="#bab4b4"/><rect x="259.3" y="398.6" width="1" height="1" fill="#b9b4b4"/><rect x="263.2" y="397.4" width="1" height="1" fill="#b8b3b3"/><rect x="267.0" y="396.3" width="1" height="1" fill="#b8b2b2"/><rect x="270.8" y="395.2" width="1" height="1" fill="#b7b1b1"/><rect x="274.6" y="394.1" width="1" height="1" fill="#b6b0b0"/><rect x="278.4" y="393.0" width="1" height="1" fill="#b5afaf"/><rect x="282.2" y="391.9" width="1" height="1" fill="#b4aeae"/><rect x="286.1" y="390.8" width="1" height="1" fill="#b4adad"/><rect x="289.9" y="389.7" width="1" height="1" fill="#b3acac"/><rect x="293.7" y="388.6" width="1" height="1" fill="#b2abab"/><rect x="297.5" y="387.5" width="1" height="1" fill="#b1aaaa"/><rect x="301.3" y="386.4" width="1" height="1" fill="#b0a9a9"/><rect x="305.1" y="385.3" width="1" height="1" fill="#b0a8a8"/><rect x="309.0" y="384.2" width="1" height="1" fill="#afa7a7"/><rect x="312.8" y="383.1" width="1" height="1" fill="#aea6a6"/><rect x="316.6" y="382.0" width="1" height="1" fill="#ada5a5"/><rect x="320.4" y="380.9" width="1" height="1" fill="#aca4a4"/><rect x="324.2" y="379.8" width="1" height="1" fill="#aca3a3"/><rect x="328.0" y="378.7" width="1" height="1" fill="#aba3a3"/><rect x="331.9" y="377.6" width="1" height="1" fill="#aaa2a2"/><rect x="335.7" y="376.5" width="1" height="1" fill="#a9a1a1"/><rect x="339.5" y="375.4" width="1" height="1" fill="#a8a0a0"/><rect x="343.3" y="374.3" width="1" height="1" fill="#a89f9f"/><rect x="347.1" y="373.2" width="1" height="1" fill="#a79e9e"/><rect x="351.0" y="372.1" width="1" height="1" fill="#a69d9d"/><rect x="354.8" y="371.0" width="1" height="1" fill="#a59c9c"/><rect x="358.6" y="369.8" width="1" height="1" fill="#a49b9b"/><rect x="362.4" y="368.7" width="1" height="1" fill="#a49a9a"/><rect x="366.2" y="367.6" width="1" height="1" fill="#a39999"/><rect x="370.0" y="366.5" width="1" height="1" fill="#a29898"/><rect x="373.9" y="365.4" width="1" height="1" fill="#a19797"/><rect x="377.7" y="364.3" width="1" height="1" fill="#a09696"/><rect x="381.5" y="363.2" width="1" height="1" fill="#a09595"/><rect x="385.3" y="362.1" width="1" height="1" fill="#9f9494"/><rect x="389.1" y="361.0" width="1" height="1" fill="#9e9393"/><rect x="392.9" y="359.9" width="1" height="1" fill="#9d9292"/><rect x="396.8" y="358.8" width="1" height="1" fill="#9c9292"/><rect x="400.6" y="357.7" width="1" height="1" fill="#9c9191"/><rect x="404.4" y="356.6" width="1" height="1" fill="#9b9090"/><rect x="408.2" y="355.5" width="1" height="1" fill="#9a8f8f"/><rect x="412.0" y="354.4" width="1" height="1" fill="#998e8e"/><rect x="415.8" y="353.3" width="1" height="1" fill="#998d8d"/><rect x="419.7" y="352.2" width="1" height="1" fill="#988c8c"/><rect x="423.5" y="351.1" width="1" height="1" fill="#978b8b"/><rect x="427.3" y="350.0" width="1" height="1" fill="#968a8a"/><rect x="431.1" y="348.9" width="1" height="1" fill="#958989"/><rect x="434.9" y="347.8" width="1" height="1" fill="#958888"/><rect x="438.7" y="346.7" width="1" height="1" fill="#948787"/><rect x="442.6" y="345.6" width="1" height="1" fill="#938686"/><rect x="446.4" y="344.5" width="1" height="1" fill="#928585"/><rect x="450.2" y="343.4" width="1" height="1" fill="#918484"/><rect x="454.0" y="342.3" width="1" height="1" fill="#918383"/><rect x="457.8" y="341.1" width="1" height="1" fill="#908282"/><rect x="461.6" y="340.0" width="1" height="1" fill="#8f8181"/><rect x="465.5" y="338.9" width="1" height="1" fill="#8e8181"/><rect x="469.3" y="337.8" width="1" height="1" fill="#8d8080"/><rect x="473.1" y="336.7" width="1" height="1" fill="#8d7f7f"/><rect x="476.9" y="335.6" width="1" height="1" fill="#8c7e7e"/><rect x="480.7" y="334.5" width="1" height="1" fill="#8b7d7d"/><rect x="484.6" y="333.4" width="1" height="1" fill="#8a7c7c"/><rect x="488.4" y="332.3" width="1" height="1" fill="#897b7b"/><rect x="492.2" y="331.2" width="1" height="1" fill="#897a7a"/><rect x="496.0" y="330.1" width="1" height="1" fill="#887979"/><rect x="499.8" y="329.0" width="1" height="1" fill="#877878"/><rect x="503.6" y="327.9" width="1" height="1" fill="#867777"/><rect x="507.5" y="326.8" width="1" height="1" fill="#857676"/><rect x="511.3" y="325.7" width="1" height="1" fill="#857575"/><rect x="515.1" y="324.6" width="1" height="1" fill="#847474"/><rect x="518.9" y="323.5" width="1" height="1" fill="#837373"/><rect x="522.7" y="322.4" width="1" height="1" fill="#827272"/><rect x="526.5" y="321.3" width="1" height="1" fill="#817171"/><rect x="530.4" y="320.2" width="1" height="1" fill="#817070"/><rect x="534.2" y="319.1" width="1" height="1" fill="#807070"/><rect x="538.0" y="318.0" width="1" height="1" fill="#7f6f6f"/><rect x="541.8" y="316.9" width="1" height="1" fill="#7e6e6e"/><rect x="545.6" y="315.8" width="1" height="1" fill="#7d6d6d"/><rect x="549.4" y="314.7" width="1" height="1" fill="#7d6c6c"/><rect x="553.3" y="313.5" width="1" height="1" fill="#7d6c6c"/><rect x="557.1" y="312.4" width="1" height="1" fill="#7d6c6c"/><rect x="560.9" y="311.3" width="1" height="1" fill="#7d6c6c"/><rect x="564.7" y="310.2" width="1" height="1" fill="#7d6c6c"/><rect x="568.5" y="309.1" width="1" height="1" fill="#7d6c6c"/><rect x="572.3" y="308.0" width="1" height="1" fill="#7d6c6c"/><rect x="576.2" y="306.9" width="1" height="1" fill="#7d6c6c"/><rect x="580.0" y="305.8" width="1" height="1" fill="#7d6c6c"/><rect x="583.8" y="304.7" width="1" height="1" fill="#7d6c6c"/><rect x="587.6" y="303.6" width="1" height="1" fill="#7d6c6c"/><rect x="591.4" y="302.5" width="1" height="1" fill="#7d6c6c"/><rect x="595.3" y="301.4" width="1" height="1" fill="#7d6c6c"/><rect x="599.1" y="300.3" width="1" height="1" fill="#7d6c6c"/><rect x="602.9" y="299.2" width="1" height="1" fill="#7d6c6c"/><rect x="606.7" y="298.1" width="1" height="1" fill="#7d6c6c"/><rect x="610.5" y="297.0" width="1" height="1" fill="#7d6c6c"/><rect x="614.3" y="295.9" width="1" height="1" fill="#7d6c6c"/><rect x="618.2" y="294.8" width="1" height="1" fill="#7d6c6c"/><rect x="622.0" y="293.7" width="1" height="1" fill="#7d6c6c"/><rect x="625.8" y="292.6" width="1" height="1" fill="#7d6c6c"/><rect x="629.6" y="291.5" width="1" height="1" fill="#7d6c6c"/><rect x="633.4" y="290.4" width="1" height="1" fill="#7d6c6c"/><rect x="637.2" y="289.3" width="1" height="1" fill="#7d6c6c"/><rect x="641.1" y="288.2" width="1" height="1" fill="#7d6c6c"/><rect x="644.9" y="287.1" width="1" height="1" fill="#7d6c6c"/><rect x="648.7" y="285.9" width="1" height="1" fill="#7d6c6c"/><rect x="652.5" y="284.8" width="1" height="1" fill="#7d6c6c"/><rect x="656.3" y="283.7" width="1" height="1" fill="#7d6c6c"/><rect x="660.1" y="282.6" width="1" height="1" fill="#7d6c6c"/><rect x="664.0" y="281.5" width="1" height="1" fill="#7d6c6c"/><rect x="667.8" y="280.4" width="1" height="1" fill="#7d6c6c"/><rect x="671.6" y="279.3" width="1" height="1" fill="#7d6c6c"/><rect x="675.4" y="278.2" width="1" height="1" fill="#7d6c6c"/><rect x="679.2" y="277.1" width="1" height="1" fill="#7d6c6c"/><rect x="683.0" y="276.0" width="1" height="1" fill="#7d6c6c"/><rect x="686.9" y="274.9" width="1" height="1" fill="#7d6c6c"/><rect x="690.7" y="273.8" width="1" height="1" fill="#7d6c6c"/><rect x="694.5" y="272.7" width="1" height="1" fill="#7d6c6c"/>
<path d="M566.6 178.6h1M570.7 182.2h1M574.8 185.7h1M579.0 189.3h1M583.1 192.9h1M587.2 196.4h1M591.3 200.0h1M595.5 203.6h1M599.6 207.1h1M603.7 210.7h1M607.8 214.3h1M611.9 217.8h1M616.1 221.4h1M620.2 225.0h1M624.3 228.5h1M628.4 232.1h1M632.5 235.6h1M636.7 239.2h1M640.8 242.8h1M644.9 246.3h1M649.0 249.9h1M653.2 253.5h1M657.3 257.0h1M661.4 260.6h1M665.5 264.2h1M669.6 267.7h1M673.8 271.3h1M677.9 274.9h1M682.0 278.4h1M686.1 282.0h1M690.3 285.6h1M694.4 289.1h1M698.5 292.7h1" stroke="#5a5a5a" stroke-width="1" fill="none"/>
<path d="M681.0 67.0h1M681.0 70.9h1M681.0 74.8h1M681.0 78.8h1M681.0 82.7h1M681.0 86.6h1M681.0 90.5h1M681.0 94.4h1M681.0 98.3h1M681.0 102.3h1M681.0 106.2h1M681.0 110.1h1M681.0 114.0h1M681.0 117.9h1M681.0 121.8h1M681.0 125.8h1M681.0 129.7h1M681.0 133.6h1M681.0 137.5h1M681.0 141.4h1M681.0 145.4h1M681.0 149.3h1M681.0 153.2h1M681.0 157.1h1M681.0 161.0h1M681.0 164.9h1M681.0 168.9h1M681.0 172.8h1M681.0 176.7h1M681.0 180.6h1M681.0 184.5h1M681.0 188.4h1M681.0 192.4h1M681.0 196.3h1M681.0 200.2h1M681.0 204.1h1M681.0 208.0h1M681.0 212.0h1M681.0 215.9h1M681.0 219.8h1M681.0 223.7h1M681.0 227.6h1M681.0 231.5h1M681.0 235.5h1M681.0 239.4h1M681.0 243.3h1M681.0 247.2h1M681.0 251.1h1M681.0 255.0h1M681.0 259.0h1M681.0 262.9h1M681.0 266.8h1M681.0 270.7h1M681.0 274.6h1M681.0 278.6h1M681.0 282.5h1M681.0 286.4h1M681.0 290.3h1M681.0 294.2h1M681.0 298.1h1M681.0 302.1h1M681.0 306.0h1M681.0 309.9h1M681.0 313.8h1M681.0 317.7h1M681.0 321.6h1M681.0 325.6h1M681.0 329.5h1M681.0 333.4h1M681.0 337.3h1M681.0 341.2h1M681.0 345.2h1M681.0 349.1h1M681.0 353.0h1M681.0 356.9h1M681.0 360.8h1M681.0 364.7h1M681.0 368.7h1M681.0 372.6h1M681.0 376.5h1M681.0 380.4h1M681.0 384.3h1M681.0 388.2h1M681.0 392.2h1M681.0 396.1h1M681.0 400.0h1" stroke="#a0a0a0" stroke-width="1" fill="none"/>
<path d="M147.4 307.3 C147.4 310.0 147.1 318.4 147.7 323.3 C148.2 328.2 149.6 332.9 150.7 336.7 C151.8 340.5 152.8 343.4 154.0 346.3 C155.2 349.2 156.6 351.3 158.0 354.0 C159.4 356.7 161.0 359.5 162.7 362.3 C164.4 365.1 166.3 368.6 168.0 371.0 C169.7 373.4 171.4 374.9 172.9 376.9 C174.4 378.9 175.7 381.1 176.9 383.0 C178.1 384.9 179.6 387.2 180.1 388.1 M203.0 289.1 C203.1 291.5 203.2 298.3 203.7 303.3 C204.1 308.3 204.7 314.1 205.7 318.9 C206.7 323.7 208.3 328.1 209.7 332.0 C211.1 335.9 212.4 339.2 214.0 342.4 C215.6 345.5 217.4 348.1 219.1 350.9 C220.8 353.7 222.3 356.6 224.0 359.3 C225.7 362.0 227.6 364.5 229.4 367.0 C231.2 369.5 232.8 372.0 234.6 374.4 C236.4 376.8 238.7 379.7 240.0 381.5 C241.3 383.3 242.2 384.4 242.6 385.0 M271.3 267.5 C271.4 269.6 271.5 274.9 271.8 280.0 C272.1 285.1 272.2 292.7 273.0 298.4 C273.8 304.1 275.4 309.6 276.8 314.4 C278.2 319.2 280.1 323.7 281.7 327.3 C283.3 330.9 284.7 333.2 286.5 336.2 C288.3 339.2 290.6 342.5 292.7 345.5 C294.8 348.5 296.6 351.2 298.8 354.0 C301.0 356.8 303.4 359.4 305.6 362.1 C307.8 364.8 310.1 367.7 312.0 370.2 C313.9 372.7 316.4 375.8 317.3 376.9 M343.7 245.9 C343.7 247.8 343.7 252.3 343.7 257.5 C343.7 262.7 343.0 271.0 343.7 277.1 C344.4 283.2 346.3 289.2 347.8 294.4 C349.3 299.6 351.2 304.4 352.9 308.3 C354.6 312.2 356.2 314.6 358.2 317.8 C360.2 321.0 362.5 324.5 364.7 327.4 C366.9 330.3 369.1 332.6 371.4 335.3 C373.7 338.0 376.1 340.8 378.5 343.7 C380.9 346.6 383.8 350.1 386.1 352.8 C388.4 355.5 391.4 358.6 392.5 359.7 M419.0 223.9 C419.0 225.9 418.7 230.9 419.0 236.1 C419.3 241.3 420.2 248.8 421.0 254.9 C421.8 261.0 422.4 267.3 423.7 272.5 C425.0 277.7 427.2 282.4 428.9 286.2 C430.6 290.0 432.1 292.2 434.0 295.4 C435.9 298.6 437.9 302.3 440.0 305.3 C442.1 308.3 444.0 310.5 446.4 313.3 C448.8 316.1 451.7 319.4 454.1 322.2 C456.6 325.0 458.8 327.7 461.1 330.4 C463.4 333.1 466.7 337.1 467.8 338.5 M498.9 202.1 C499.1 204.4 499.9 210.7 500.4 215.8 C500.9 220.9 501.3 227.7 502.1 232.9 C502.9 238.1 504.2 242.6 505.4 247.1 C506.6 251.6 508.1 255.9 509.4 259.7 C510.7 263.5 511.8 266.3 513.2 269.7 C514.6 273.1 516.1 276.7 517.8 279.9 C519.4 283.1 521.2 286.1 523.1 289.1 C525.0 292.2 527.1 295.1 529.2 298.2 C531.4 301.3 533.9 304.8 536.0 307.8 C538.1 310.8 541.1 314.8 542.1 316.2 M587.8 184.0 C588.2 186.4 589.8 194.3 590.4 198.6 C591.0 202.9 591.0 206.1 591.6 209.6 C592.2 213.1 593.0 216.4 593.7 219.5 C594.4 222.6 595.0 224.9 595.7 227.9 C596.4 230.9 597.2 234.2 598.0 237.7 C598.8 241.2 599.7 245.5 600.7 249.0 C601.7 252.5 603.0 255.1 604.2 258.5 C605.4 261.9 606.6 265.6 608.0 269.6 C609.4 273.6 610.7 278.0 612.3 282.3 C613.9 286.6 616.7 293.1 617.6 295.2 M147.4 307.3 C156.7 304.3 182.3 295.7 203.0 289.1 C223.7 282.5 247.9 274.7 271.3 267.5 C294.8 260.3 319.1 253.2 343.7 245.9 C368.3 238.6 393.1 231.2 419.0 223.9 C444.9 216.6 470.8 208.8 498.9 202.1 C527.0 195.4 567.6 187.6 587.8 184.0 C608.0 180.4 610.0 181.5 620.0 180.7 C630.0 179.9 638.0 179.3 648.0 179.4 C658.0 179.5 674.6 181.1 679.9 181.4 M147.7 323.3 C157.0 320.0 183.0 310.5 203.7 303.3 C224.4 296.1 248.5 287.6 271.8 280.0 C295.1 272.4 319.2 264.8 343.7 257.5 C368.2 250.2 392.9 243.0 419.0 236.1 C445.1 229.2 471.8 222.1 500.4 215.8 C529.0 209.6 570.5 202.1 590.4 198.6 C610.3 195.1 605.6 195.9 620.0 195.1 C634.4 194.3 667.3 194.1 676.8 193.9 M150.7 336.7 C159.9 333.7 185.3 325.3 205.7 318.9 C226.1 312.5 250.0 305.4 273.0 298.4 C296.0 291.4 319.0 284.4 343.7 277.1 C368.4 269.9 394.6 262.3 421.0 254.9 C447.4 247.5 473.7 240.5 502.1 232.9 C530.5 225.3 572.0 214.3 591.6 209.6 C611.2 204.9 606.0 206.4 620.0 204.7 C634.0 203.0 666.6 200.3 675.9 199.4 M154.0 346.3 C163.3 343.9 189.2 337.3 209.7 332.0 C230.2 326.7 253.8 320.7 276.8 314.4 C299.8 308.1 323.3 301.4 347.8 294.4 C372.3 287.4 397.4 280.4 423.7 272.5 C450.0 264.6 477.1 255.9 505.4 247.1 C533.7 238.3 574.6 225.4 593.7 219.5 C612.8 213.6 606.6 213.9 620.0 211.4 C633.4 208.9 665.1 205.8 674.1 204.7 M158.0 354.0 C167.3 352.1 193.4 346.8 214.0 342.4 C234.6 337.9 258.6 333.0 281.7 327.3 C304.8 321.6 328.4 315.2 352.9 308.3 C377.4 301.4 402.8 294.3 428.9 286.2 C455.0 278.1 481.6 269.4 509.4 259.7 C537.2 250.0 577.3 234.6 595.7 227.9 C614.1 221.2 607.2 222.3 620.0 219.5 C632.8 216.7 663.8 212.2 672.6 210.8 M162.7 362.3 C172.1 360.4 198.5 355.2 219.1 350.9 C239.7 346.5 263.3 341.7 286.5 336.2 C309.7 330.7 333.6 324.6 358.2 317.8 C382.8 311.0 408.2 303.4 434.0 295.4 C459.8 287.4 485.9 279.3 513.2 269.7 C540.5 260.1 580.2 244.1 598.0 237.7 C615.8 231.2 607.9 233.7 620.0 231.0 C632.1 228.3 662.2 223.3 670.7 221.8 M168.0 371.0 C177.3 369.1 203.2 363.6 224.0 359.3 C244.8 355.1 269.2 350.8 292.7 345.5 C316.1 340.2 340.1 334.1 364.7 327.4 C389.2 320.7 414.5 313.2 440.0 305.3 C465.5 297.4 491.0 289.3 517.8 279.9 C544.6 270.5 583.7 255.4 600.7 249.0 C617.7 242.6 608.8 244.2 620.0 241.5 C631.2 238.8 660.0 234.0 668.0 232.5 M172.9 376.9 C182.3 375.2 208.4 370.8 229.4 367.0 C250.4 363.2 275.1 359.3 298.8 354.0 C322.5 348.7 346.8 342.1 371.4 335.3 C396.0 328.5 421.1 321.0 446.4 313.3 C471.7 305.6 496.8 298.2 523.1 289.1 C549.4 280.0 588.1 264.4 604.2 258.5 C620.4 252.6 609.7 256.4 620.0 253.6 C630.3 250.8 658.3 243.8 666.0 241.9 M176.9 383.0 C186.5 381.6 213.1 377.9 234.6 374.4 C256.1 370.9 281.6 367.2 305.6 362.1 C329.6 357.0 353.8 350.4 378.5 343.7 C403.2 337.0 429.0 329.8 454.1 322.2 C479.2 314.6 503.6 307.0 529.2 298.2 C554.9 289.4 592.9 275.0 608.0 269.6 C623.1 264.2 610.6 268.7 620.0 265.8 C629.4 262.9 656.8 254.4 664.2 252.1 M180.1 388.1 C190.1 387.0 218.0 384.5 240.0 381.5 C262.0 378.5 287.6 375.0 312.0 370.2 C336.4 365.4 361.2 359.4 386.1 352.8 C411.0 346.2 436.1 337.9 461.1 330.4 C486.1 322.9 510.8 315.8 536.0 307.8 C561.2 299.8 598.3 287.0 612.3 282.3 C626.3 277.6 612.2 282.1 620.0 279.5 C627.8 276.9 652.4 269.1 658.9 267.0 M180.1 388.1 C190.5 387.6 219.7 386.9 242.6 385.0 C265.5 383.1 292.3 381.1 317.3 376.9 C342.3 372.7 367.4 366.1 392.5 359.7 C417.6 353.3 442.9 345.8 467.8 338.5 C492.7 331.2 517.1 323.4 542.1 316.2 C567.1 309.0 602.9 299.5 617.6 295.2 C632.3 290.9 628.1 291.3 630.2 290.5 M679.9 181.4 C679.4 183.5 677.5 190.9 676.8 193.9 C676.1 196.9 676.3 197.6 675.9 199.4 C675.5 201.2 674.6 202.8 674.1 204.7 C673.6 206.6 673.2 208.0 672.6 210.8 C672.0 213.7 671.5 218.2 670.7 221.8 C669.9 225.4 668.8 229.2 668.0 232.5 C667.2 235.8 666.6 238.6 666.0 241.9 C665.4 245.2 664.5 250.4 664.2 252.1 M631.4 223.3 C633.3 223.2 638.7 221.4 642.9 222.6 C647.1 223.8 653.3 227.5 656.6 230.2 C659.9 232.9 661.3 236.1 662.7 238.6 C664.1 241.1 664.8 242.9 665.0 245.2 C665.2 247.4 664.3 250.9 664.2 252.1" stroke="#00c4cc" stroke-width="1.05" fill="none"/>
<path d="M664.2 252.1 C663.7 253.5 662.0 258.0 661.1 260.5 C660.2 263.0 660.2 264.5 658.9 267.0 C657.6 269.5 655.9 273.0 653.5 275.7 C651.1 278.4 647.4 281.1 644.4 283.3 C641.4 285.5 637.6 287.5 635.2 288.7 C632.8 289.9 631.0 290.2 630.2 290.5" stroke="#c83828" stroke-width="0.95" fill="none"/>
<path d="M679.9 181.4 C679.4 183.5 677.5 190.9 676.8 193.9 C676.1 196.9 676.3 197.6 675.9 199.4 C675.5 201.2 674.6 202.8 674.1 204.7 C673.6 206.6 673.2 208.0 672.6 210.8 C672.0 213.7 671.5 218.2 670.7 221.8 C669.9 225.4 668.8 229.2 668.0 232.5 C667.2 235.8 666.6 238.6 666.0 241.9 C665.4 245.2 664.5 250.4 664.2 252.1" stroke="#c04020" stroke-width="0.9" stroke-dasharray="2 3" fill="none"/>
<path d="M131.7 319.3L181.7 333.3M131.7 338.3L181.7 333.3M131.7 357.8L181.7 333.3M131.7 378.5L181.7 333.3M139.8 385.8L181.7 343.6M148.3 393.0L181.7 354.0M156.7 400.3L181.7 362.6M165.1 407.5L181.7 372.3M173.5 414.8L181.7 382.0M194.3 301.3L244.3 315.3M194.3 320.3L244.3 315.3M194.3 339.8L244.3 315.3M194.3 360.5L244.3 315.3M202.4 367.8L244.3 325.6M210.9 375.0L244.3 336.0M219.3 382.3L244.3 344.6M227.7 389.5L244.3 354.3M236.1 396.8L244.3 364.0M269.8 279.4L319.8 293.4M269.8 298.4L319.8 293.4M269.8 317.9L319.8 293.4M269.8 338.6L319.8 293.4M277.9 345.9L319.8 303.7M286.4 353.1L319.8 314.1M294.8 360.4L319.8 322.7M303.2 367.6L319.8 332.4M311.6 374.9L319.8 342.1M344.6 257.9L394.6 271.9M344.6 276.9L394.6 271.9M344.6 296.4L394.6 271.9M344.6 317.1L394.6 271.9M352.7 324.4L394.6 282.2M361.2 331.6L394.6 292.6M369.6 338.9L394.6 301.2M378.0 346.1L394.6 310.9M386.4 353.4L394.6 320.6M419.6 236.3L469.6 250.3M419.6 255.3L469.6 250.3M419.6 274.8L469.6 250.3M419.6 295.5L469.6 250.3M427.7 302.8L469.6 260.6M436.2 310.0L469.6 271.0M444.6 317.3L469.6 279.6M453.0 324.5L469.6 289.3M461.4 331.8L469.6 299.0M494.3 214.5L544.3 228.5M494.3 233.5L544.3 228.5M494.3 253.0L544.3 228.5M494.3 273.7L544.3 228.5M502.4 281.0L544.3 238.8M510.9 288.2L544.3 249.2M519.3 295.5L544.3 257.8M527.7 302.7L544.3 267.5M536.1 310.0L544.3 277.2M569.3 193.0L619.3 207.0M569.3 212.0L619.3 207.0M569.3 231.5L619.3 207.0M569.3 252.2L619.3 207.0M577.4 259.5L619.3 217.3M585.9 266.7L619.3 227.7M594.3 274.0L619.3 236.3M602.7 281.2L619.3 246.0M611.1 288.5L619.3 255.7" stroke="#a85810" stroke-width="1" fill="none"/>
<path d="M146.7 322.3h2v2h-2zM149.7 335.7h2v2h-2zM153.0 345.3h2v2h-2zM157.0 353.0h2v2h-2zM161.7 361.3h2v2h-2zM167.0 370.0h2v2h-2zM171.9 375.9h2v2h-2zM175.9 382.0h2v2h-2zM179.1 387.1h2v2h-2zM202.7 302.3h2v2h-2zM204.7 317.9h2v2h-2zM208.7 331.0h2v2h-2zM213.0 341.4h2v2h-2zM218.1 349.9h2v2h-2zM223.0 358.3h2v2h-2zM228.4 366.0h2v2h-2zM233.6 373.4h2v2h-2zM239.0 380.5h2v2h-2zM270.8 279.0h2v2h-2zM272.0 297.4h2v2h-2zM275.8 313.4h2v2h-2zM280.7 326.3h2v2h-2zM285.5 335.2h2v2h-2zM291.7 344.5h2v2h-2zM297.8 353.0h2v2h-2zM304.6 361.1h2v2h-2zM311.0 369.2h2v2h-2zM342.7 256.5h2v2h-2zM342.7 276.1h2v2h-2zM346.8 293.4h2v2h-2zM351.9 307.3h2v2h-2zM357.2 316.8h2v2h-2zM363.7 326.4h2v2h-2zM370.4 334.3h2v2h-2zM377.5 342.7h2v2h-2zM385.1 351.8h2v2h-2zM418.0 235.1h2v2h-2zM420.0 253.9h2v2h-2zM422.7 271.5h2v2h-2zM427.9 285.2h2v2h-2zM433.0 294.4h2v2h-2zM439.0 304.3h2v2h-2zM445.4 312.3h2v2h-2zM453.1 321.2h2v2h-2zM460.1 329.4h2v2h-2zM499.4 214.8h2v2h-2zM501.1 231.9h2v2h-2zM504.4 246.1h2v2h-2zM508.4 258.7h2v2h-2zM512.2 268.7h2v2h-2zM516.8 278.9h2v2h-2zM522.1 288.1h2v2h-2zM528.2 297.2h2v2h-2zM535.0 306.8h2v2h-2zM589.4 197.6h2v2h-2zM590.6 208.6h2v2h-2zM592.7 218.5h2v2h-2zM594.7 226.9h2v2h-2zM597.0 236.7h2v2h-2zM599.7 248.0h2v2h-2zM603.2 257.5h2v2h-2zM607.0 268.6h2v2h-2zM611.3 281.3h2v2h-2zM675.8 192.9h2v2h-2zM674.9 198.4h2v2h-2zM673.1 203.7h2v2h-2zM671.6 209.8h2v2h-2zM669.7 220.8h2v2h-2zM667.0 231.5h2v2h-2zM665.0 240.9h2v2h-2zM663.2 251.1h2v2h-2zM657.9 266.0h2v2h-2z" fill="#10e040"/>
<path d="M180.9 331.9h1.6l0.6 0.6v1.6l-0.6 0.6h-1.6l-0.6 -0.6v-1.6zM130.9 317.9h1.6l0.6 0.6v1.6l-0.6 0.6h-1.6l-0.6 -0.6v-1.6zM130.9 336.9h1.6l0.6 0.6v1.6l-0.6 0.6h-1.6l-0.6 -0.6v-1.6zM130.9 356.4h1.6l0.6 0.6v1.6l-0.6 0.6h-1.6l-0.6 -0.6v-1.6zM130.9 377.1h1.6l0.6 0.6v1.6l-0.6 0.6h-1.6l-0.6 -0.6v-1.6zM139.0 384.4h1.6l0.6 0.6v1.6l-0.6 0.6h-1.6l-0.6 -0.6v-1.6zM147.5 391.6h1.6l0.6 0.6v1.6l-0.6 0.6h-1.6l-0.6 -0.6v-1.6zM155.9 398.9h1.6l0.6 0.6v1.6l-0.6 0.6h-1.6l-0.6 -0.6v-1.6zM164.3 406.1h1.6l0.6 0.6v1.6l-0.6 0.6h-1.6l-0.6 -0.6v-1.6zM172.7 413.4h1.6l0.6 0.6v1.6l-0.6 0.6h-1.6l-0.6 -0.6v-1.6zM180.9 420.7h1.6l0.6 0.6v1.6l-0.6 0.6h-1.6l-0.6 -0.6v-1.6zM180.9 342.2h1.6l0.6 0.6v1.6l-0.6 0.6h-1.6l-0.6 -0.6v-1.6zM180.9 352.6h1.6l0.6 0.6v1.6l-0.6 0.6h-1.6l-0.6 -0.6v-1.6zM180.9 361.2h1.6l0.6 0.6v1.6l-0.6 0.6h-1.6l-0.6 -0.6v-1.6zM180.9 370.9h1.6l0.6 0.6v1.6l-0.6 0.6h-1.6l-0.6 -0.6v-1.6zM180.9 380.6h1.6l0.6 0.6v1.6l-0.6 0.6h-1.6l-0.6 -0.6v-1.6zM243.5 313.9h1.6l0.6 0.6v1.6l-0.6 0.6h-1.6l-0.6 -0.6v-1.6zM193.5 299.9h1.6l0.6 0.6v1.6l-0.6 0.6h-1.6l-0.6 -0.6v-1.6zM193.5 318.9h1.6l0.6 0.6v1.6l-0.6 0.6h-1.6l-0.6 -0.6v-1.6zM193.5 338.4h1.6l0.6 0.6v1.6l-0.6 0.6h-1.6l-0.6 -0.6v-1.6zM193.5 359.1h1.6l0.6 0.6v1.6l-0.6 0.6h-1.6l-0.6 -0.6v-1.6zM201.6 366.4h1.6l0.6 0.6v1.6l-0.6 0.6h-1.6l-0.6 -0.6v-1.6zM210.1 373.6h1.6l0.6 0.6v1.6l-0.6 0.6h-1.6l-0.6 -0.6v-1.6zM218.5 380.9h1.6l0.6 0.6v1.6l-0.6 0.6h-1.6l-0.6 -0.6v-1.6zM226.9 388.1h1.6l0.6 0.6v1.6l-0.6 0.6h-1.6l-0.6 -0.6v-1.6zM235.3 395.4h1.6l0.6 0.6v1.6l-0.6 0.6h-1.6l-0.6 -0.6v-1.6zM243.5 402.7h1.6l0.6 0.6v1.6l-0.6 0.6h-1.6l-0.6 -0.6v-1.6zM243.5 324.2h1.6l0.6 0.6v1.6l-0.6 0.6h-1.6l-0.6 -0.6v-1.6zM243.5 334.6h1.6l0.6 0.6v1.6l-0.6 0.6h-1.6l-0.6 -0.6v-1.6zM243.5 343.2h1.6l0.6 0.6v1.6l-0.6 0.6h-1.6l-0.6 -0.6v-1.6zM243.5 352.9h1.6l0.6 0.6v1.6l-0.6 0.6h-1.6l-0.6 -0.6v-1.6zM243.5 362.6h1.6l0.6 0.6v1.6l-0.6 0.6h-1.6l-0.6 -0.6v-1.6zM319.0 292.0h1.6l0.6 0.6v1.6l-0.6 0.6h-1.6l-0.6 -0.6v-1.6zM269.0 278.0h1.6l0.6 0.6v1.6l-0.6 0.6h-1.6l-0.6 -0.6v-1.6zM269.0 297.0h1.6l0.6 0.6v1.6l-0.6 0.6h-1.6l-0.6 -0.6v-1.6zM269.0 316.5h1.6l0.6 0.6v1.6l-0.6 0.6h-1.6l-0.6 -0.6v-1.6zM269.0 337.2h1.6l0.6 0.6v1.6l-0.6 0.6h-1.6l-0.6 -0.6v-1.6zM277.1 344.5h1.6l0.6 0.6v1.6l-0.6 0.6h-1.6l-0.6 -0.6v-1.6zM285.6 351.7h1.6l0.6 0.6v1.6l-0.6 0.6h-1.6l-0.6 -0.6v-1.6zM294.0 359.0h1.6l0.6 0.6v1.6l-0.6 0.6h-1.6l-0.6 -0.6v-1.6zM302.4 366.2h1.6l0.6 0.6v1.6l-0.6 0.6h-1.6l-0.6 -0.6v-1.6zM310.8 373.5h1.6l0.6 0.6v1.6l-0.6 0.6h-1.6l-0.6 -0.6v-1.6zM319.0 380.8h1.6l0.6 0.6v1.6l-0.6 0.6h-1.6l-0.6 -0.6v-1.6zM319.0 302.3h1.6l0.6 0.6v1.6l-0.6 0.6h-1.6l-0.6 -0.6v-1.6zM319.0 312.7h1.6l0.6 0.6v1.6l-0.6 0.6h-1.6l-0.6 -0.6v-1.6zM319.0 321.3h1.6l0.6 0.6v1.6l-0.6 0.6h-1.6l-0.6 -0.6v-1.6zM319.0 331.0h1.6l0.6 0.6v1.6l-0.6 0.6h-1.6l-0.6 -0.6v-1.6zM319.0 340.7h1.6l0.6 0.6v1.6l-0.6 0.6h-1.6l-0.6 -0.6v-1.6zM393.8 270.5h1.6l0.6 0.6v1.6l-0.6 0.6h-1.6l-0.6 -0.6v-1.6zM343.8 256.5h1.6l0.6 0.6v1.6l-0.6 0.6h-1.6l-0.6 -0.6v-1.6zM343.8 275.5h1.6l0.6 0.6v1.6l-0.6 0.6h-1.6l-0.6 -0.6v-1.6zM343.8 295.0h1.6l0.6 0.6v1.6l-0.6 0.6h-1.6l-0.6 -0.6v-1.6zM343.8 315.7h1.6l0.6 0.6v1.6l-0.6 0.6h-1.6l-0.6 -0.6v-1.6zM351.9 323.0h1.6l0.6 0.6v1.6l-0.6 0.6h-1.6l-0.6 -0.6v-1.6zM360.4 330.2h1.6l0.6 0.6v1.6l-0.6 0.6h-1.6l-0.6 -0.6v-1.6zM368.8 337.5h1.6l0.6 0.6v1.6l-0.6 0.6h-1.6l-0.6 -0.6v-1.6zM377.2 344.7h1.6l0.6 0.6v1.6l-0.6 0.6h-1.6l-0.6 -0.6v-1.6zM385.6 352.0h1.6l0.6 0.6v1.6l-0.6 0.6h-1.6l-0.6 -0.6v-1.6zM393.8 359.3h1.6l0.6 0.6v1.6l-0.6 0.6h-1.6l-0.6 -0.6v-1.6zM393.8 280.8h1.6l0.6 0.6v1.6l-0.6 0.6h-1.6l-0.6 -0.6v-1.6zM393.8 291.2h1.6l0.6 0.6v1.6l-0.6 0.6h-1.6l-0.6 -0.6v-1.6zM393.8 299.8h1.6l0.6 0.6v1.6l-0.6 0.6h-1.6l-0.6 -0.6v-1.6zM393.8 309.5h1.6l0.6 0.6v1.6l-0.6 0.6h-1.6l-0.6 -0.6v-1.6zM393.8 319.2h1.6l0.6 0.6v1.6l-0.6 0.6h-1.6l-0.6 -0.6v-1.6zM468.8 248.9h1.6l0.6 0.6v1.6l-0.6 0.6h-1.6l-0.6 -0.6v-1.6zM418.8 234.9h1.6l0.6 0.6v1.6l-0.6 0.6h-1.6l-0.6 -0.6v-1.6zM418.8 253.9h1.6l0.6 0.6v1.6l-0.6 0.6h-1.6l-0.6 -0.6v-1.6zM418.8 273.4h1.6l0.6 0.6v1.6l-0.6 0.6h-1.6l-0.6 -0.6v-1.6zM418.8 294.1h1.6l0.6 0.6v1.6l-0.6 0.6h-1.6l-0.6 -0.6v-1.6zM426.9 301.4h1.6l0.6 0.6v1.6l-0.6 0.6h-1.6l-0.6 -0.6v-1.6zM435.4 308.6h1.6l0.6 0.6v1.6l-0.6 0.6h-1.6l-0.6 -0.6v-1.6zM443.8 315.9h1.6l0.6 0.6v1.6l-0.6 0.6h-1.6l-0.6 -0.6v-1.6zM452.2 323.1h1.6l0.6 0.6v1.6l-0.6 0.6h-1.6l-0.6 -0.6v-1.6zM460.6 330.4h1.6l0.6 0.6v1.6l-0.6 0.6h-1.6l-0.6 -0.6v-1.6zM468.8 337.7h1.6l0.6 0.6v1.6l-0.6 0.6h-1.6l-0.6 -0.6v-1.6zM468.8 259.2h1.6l0.6 0.6v1.6l-0.6 0.6h-1.6l-0.6 -0.6v-1.6zM468.8 269.6h1.6l0.6 0.6v1.6l-0.6 0.6h-1.6l-0.6 -0.6v-1.6zM468.8 278.2h1.6l0.6 0.6v1.6l-0.6 0.6h-1.6l-0.6 -0.6v-1.6zM468.8 287.9h1.6l0.6 0.6v1.6l-0.6 0.6h-1.6l-0.6 -0.6v-1.6zM468.8 297.6h1.6l0.6 0.6v1.6l-0.6 0.6h-1.6l-0.6 -0.6v-1.6zM543.5 227.1h1.6l0.6 0.6v1.6l-0.6 0.6h-1.6l-0.6 -0.6v-1.6zM493.5 213.1h1.6l0.6 0.6v1.6l-0.6 0.6h-1.6l-0.6 -0.6v-1.6zM493.5 232.1h1.6l0.6 0.6v1.6l-0.6 0.6h-1.6l-0.6 -0.6v-1.6zM493.5 251.6h1.6l0.6 0.6v1.6l-0.6 0.6h-1.6l-0.6 -0.6v-1.6zM493.5 272.3h1.6l0.6 0.6v1.6l-0.6 0.6h-1.6l-0.6 -0.6v-1.6zM501.6 279.6h1.6l0.6 0.6v1.6l-0.6 0.6h-1.6l-0.6 -0.6v-1.6zM510.1 286.8h1.6l0.6 0.6v1.6l-0.6 0.6h-1.6l-0.6 -0.6v-1.6zM518.5 294.1h1.6l0.6 0.6v1.6l-0.6 0.6h-1.6l-0.6 -0.6v-1.6zM526.9 301.3h1.6l0.6 0.6v1.6l-0.6 0.6h-1.6l-0.6 -0.6v-1.6zM535.3 308.6h1.6l0.6 0.6v1.6l-0.6 0.6h-1.6l-0.6 -0.6v-1.6zM543.5 315.9h1.6l0.6 0.6v1.6l-0.6 0.6h-1.6l-0.6 -0.6v-1.6zM543.5 237.4h1.6l0.6 0.6v1.6l-0.6 0.6h-1.6l-0.6 -0.6v-1.6zM543.5 247.8h1.6l0.6 0.6v1.6l-0.6 0.6h-1.6l-0.6 -0.6v-1.6zM543.5 256.4h1.6l0.6 0.6v1.6l-0.6 0.6h-1.6l-0.6 -0.6v-1.6zM543.5 266.1h1.6l0.6 0.6v1.6l-0.6 0.6h-1.6l-0.6 -0.6v-1.6zM543.5 275.8h1.6l0.6 0.6v1.6l-0.6 0.6h-1.6l-0.6 -0.6v-1.6zM618.5 205.6h1.6l0.6 0.6v1.6l-0.6 0.6h-1.6l-0.6 -0.6v-1.6zM568.5 191.6h1.6l0.6 0.6v1.6l-0.6 0.6h-1.6l-0.6 -0.6v-1.6zM568.5 210.6h1.6l0.6 0.6v1.6l-0.6 0.6h-1.6l-0.6 -0.6v-1.6zM568.5 230.1h1.6l0.6 0.6v1.6l-0.6 0.6h-1.6l-0.6 -0.6v-1.6zM568.5 250.8h1.6l0.6 0.6v1.6l-0.6 0.6h-1.6l-0.6 -0.6v-1.6zM576.6 258.1h1.6l0.6 0.6v1.6l-0.6 0.6h-1.6l-0.6 -0.6v-1.6zM585.1 265.3h1.6l0.6 0.6v1.6l-0.6 0.6h-1.6l-0.6 -0.6v-1.6zM593.5 272.6h1.6l0.6 0.6v1.6l-0.6 0.6h-1.6l-0.6 -0.6v-1.6zM601.9 279.8h1.6l0.6 0.6v1.6l-0.6 0.6h-1.6l-0.6 -0.6v-1.6zM610.3 287.1h1.6l0.6 0.6v1.6l-0.6 0.6h-1.6l-0.6 -0.6v-1.6zM618.5 294.4h1.6l0.6 0.6v1.6l-0.6 0.6h-1.6l-0.6 -0.6v-1.6zM618.5 215.9h1.6l0.6 0.6v1.6l-0.6 0.6h-1.6l-0.6 -0.6v-1.6zM618.5 226.3h1.6l0.6 0.6v1.6l-0.6 0.6h-1.6l-0.6 -0.6v-1.6zM618.5 234.9h1.6l0.6 0.6v1.6l-0.6 0.6h-1.6l-0.6 -0.6v-1.6zM618.5 244.6h1.6l0.6 0.6v1.6l-0.6 0.6h-1.6l-0.6 -0.6v-1.6zM618.5 254.3h1.6l0.6 0.6v1.6l-0.6 0.6h-1.6l-0.6 -0.6v-1.6zM629.2 255.9h1.6l0.6 0.6v1.6l-0.6 0.6h-1.6l-0.6 -0.6v-1.6zM642.0 252.6h1.6l0.6 0.6v1.6l-0.6 0.6h-1.6l-0.6 -0.6v-1.6zM629.4 289.1h1.6l0.6 0.6v1.6l-0.6 0.6h-1.6l-0.6 -0.6v-1.6zM146.6 305.9h1.6l0.6 0.6v1.6l-0.6 0.6h-1.6l-0.6 -0.6v-1.6zM202.2 287.7h1.6l0.6 0.6v1.6l-0.6 0.6h-1.6l-0.6 -0.6v-1.6zM270.5 266.1h1.6l0.6 0.6v1.6l-0.6 0.6h-1.6l-0.6 -0.6v-1.6zM342.9 244.5h1.6l0.6 0.6v1.6l-0.6 0.6h-1.6l-0.6 -0.6v-1.6zM418.2 222.5h1.6l0.6 0.6v1.6l-0.6 0.6h-1.6l-0.6 -0.6v-1.6zM498.1 200.7h1.6l0.6 0.6v1.6l-0.6 0.6h-1.6l-0.6 -0.6v-1.6zM587.0 182.6h1.6l0.6 0.6v1.6l-0.6 0.6h-1.6l-0.6 -0.6v-1.6zM679.1 180.0h1.6l0.6 0.6v1.6l-0.6 0.6h-1.6l-0.6 -0.6v-1.6zM179.3 386.7h1.6l0.6 0.6v1.6l-0.6 0.6h-1.6l-0.6 -0.6v-1.6zM241.8 383.6h1.6l0.6 0.6v1.6l-0.6 0.6h-1.6l-0.6 -0.6v-1.6zM316.5 375.5h1.6l0.6 0.6v1.6l-0.6 0.6h-1.6l-0.6 -0.6v-1.6zM391.7 358.3h1.6l0.6 0.6v1.6l-0.6 0.6h-1.6l-0.6 -0.6v-1.6zM467.0 337.1h1.6l0.6 0.6v1.6l-0.6 0.6h-1.6l-0.6 -0.6v-1.6zM541.3 314.8h1.6l0.6 0.6v1.6l-0.6 0.6h-1.6l-0.6 -0.6v-1.6zM616.8 293.8h1.6l0.6 0.6v1.6l-0.6 0.6h-1.6l-0.6 -0.6v-1.6z" fill="#f0f000"/>
<path d="M114 443l5 5.3M119 443l-5 5.3" stroke="#ffffff" stroke-width="1.15"/>
<path d="M559.3 173.8l2.3 2.5l2.3 -2.5M561.6 176.3v2.6" stroke="#f0f0f0" stroke-width="0.9" fill="none"/>
<path d="M681 59.8h5l-5 4.8h5" stroke="#f0f0f0" stroke-width="0.9" fill="none"/></svg>

<!-- left panel: Entities -->
<div class="hdr" style="top:46px"><span class="htx">Entities</span><svg class="hx"><path d="M0.5 0.5 L4.5 4.5 M4.5 0.5 L0.5 4.5" stroke="#111" stroke-width="1.3"/></svg></div>
<div class="a" style="left:0;top:56px;width:111px;height:1.1px;background:#787878"></div>
<div class="a" style="left:0;top:57px;width:1.2px;height:221px;background:#8c8c8c"></div>
<div class="a" style="left:1.5px;top:57px;width:106px;height:12px;background:#f4f4f4"></div>
<div class="a" style="left:1.5px;top:69px;width:106px;height:209px;background:#fff"></div>
<div class="a" style="left:29.3px;top:59.6px;width:23.5px;height:9.4px;background:#ececec;border:1px solid #b0b0b0;border-bottom:none"></div>
<div class="a" style="left:3.2px;top:58.5px;width:26.3px;height:10.8px;background:#fff;border:1px solid #b0b0b0;border-bottom:none"></div>
<div class="a" style="left:8px;top:61px;font-size:6.3px;color:#000;transform:scaleX(0.835);transform-origin:0 0">Parents</div>
<div class="a" style="left:32px;top:62.2px;font-size:6.3px;color:#000;transform:scaleX(0.834);transform-origin:0 0">Children</div>
<svg class="a" style="left:5.5px;top:69.5px" width="7" height="6"><path d="M1 0.5l2.5 2.5l-2.5 2.5z" fill="#fff" stroke="#a8a8a8" stroke-width="0.8"/><path d="M4.2 3h2.3" stroke="#c0c0c0" stroke-width="0.8"/></svg>
<svg class="ic" style="top:68.5px" width="8" height="8"><circle cx="4" cy="4" r="2.6" fill="#f4f000" stroke="#222" stroke-width="0.8"/><path d="M6.5 2.8h1.5M6.5 5.2h1.5M0 4h1.5" stroke="#111" stroke-width="1"/></svg>
<div class="ti" style="top:68.7px">Components</div>
<div class="a" style="left:6.5px;top:80.2px;width:5px;height:0.8px;background:#b8b8b8"></div>
<svg class="ic" style="top:76.5px" width="8" height="8"><path d="M0.5 2.5l3.5 -2l3.5 2l-1 3.5l-2.5 2l-2.5 -2z" fill="#f4f000" stroke="#222" stroke-width="0.9"/><path d="M2.5 3l1.5 2l1.5 -2" stroke="#222" stroke-width="0.7" fill="none"/></svg>
<div class="ti" style="top:76.7px">Surfaces</div>
<svg class="a" style="left:5.5px;top:85.5px" width="7" height="6"><path d="M1 0.5l2.5 2.5l-2.5 2.5z" fill="#fff" stroke="#a8a8a8" stroke-width="0.8"/><path d="M4.2 3h2.3" stroke="#c0c0c0" stroke-width="0.8"/></svg>
<svg class="ic" style="top:84.5px" width="8" height="8"><rect x="0" y="0" width="8" height="8" fill="#f8f080"/><path d="M0.5 7.5l2.5 -3l1.5 1.5l3 -5" stroke="#111" stroke-width="1.1" fill="none"/></svg>
<div class="ti" style="top:84.7px">Curves</div>
<svg class="a" style="left:5.5px;top:93.5px" width="7" height="6"><path d="M1 0.5l2.5 2.5l-2.5 2.5z" fill="#fff" stroke="#a8a8a8" stroke-width="0.8"/><path d="M4.2 3h2.3" stroke="#c0c0c0" stroke-width="0.8"/></svg>
<svg class="ic" style="top:92.5px" width="8" height="8"><rect x="0" y="0" width="8" height="8" fill="#f8f080"/><path d="M1.5 1.5l5 5M6.5 1.5l-5 5" stroke="#111" stroke-width="1"/></svg>
<div class="ti" style="top:92.7px">Points</div>
<div class="a" style="left:6.5px;top:104.2px;width:5px;height:0.8px;background:#b8b8b8"></div>
<svg class="ic" style="top:100.5px" width="8" height="8"><path d="M0.5 1.5l6 6" stroke="#222" stroke-width="0.8"/><path d="M1.5 0.5l6 6" stroke="#f4f000" stroke-width="2.4"/><path d="M2 0l-1.5 1.5" stroke="#111" stroke-width="0.8"/></svg>
<div class="ti" style="top:100.7px">Planes</div>
<div class="a" style="left:6.5px;top:112.2px;width:5px;height:0.8px;background:#b8b8b8"></div>
<svg class="ic" style="top:108.5px" width="8" height="8"><rect x="0" y="0" width="8" height="8" fill="#f8f080"/><path d="M2 1v6h5M2 7l4 -4" stroke="#111" stroke-width="1" fill="none"/></svg>
<div class="ti" style="top:108.7px">Frames</div>
<div class="a" style="left:6.5px;top:120.2px;width:5px;height:0.8px;background:#b8b8b8"></div>
<svg class="ic" style="top:116.5px" width="8" height="8"><rect x="0.5" y="0.5" width="7" height="7" fill="#f4f000" stroke="#111" stroke-width="1.1"/><rect x="2.5" y="2.5" width="3" height="3" fill="#d8d060" stroke="#444" stroke-width="0.5"/></svg>
<div class="ti" style="top:116.7px">Triangle Meshes</div>
<div class="a" style="left:6.5px;top:128.2px;width:5px;height:0.8px;background:#b8b8b8"></div>
<svg class="ic" style="top:124.5px" width="8" height="8"><rect x="0" y="0" width="8" height="8" fill="#f8f080"/><path d="M1 7l3 -6M3 7.5l4.5 -6" stroke="#c020c0" stroke-width="1.2"/><path d="M1 4h6" stroke="#111" stroke-width="0.9"/></svg>
<div class="ti" style="top:124.7px">Wireframes</div>
<div class="a" style="left:6.5px;top:136.2px;width:5px;height:0.8px;background:#b8b8b8"></div>
<svg class="ic" style="top:132.5px" width="8" height="8"><path d="M0.5 4c0 -3 3 -4 5 -3c2.5 1 2.5 5 0 6c-2 1 -5 0 -5 -3z" fill="#f0a030" stroke="#c06010" stroke-width="0.8"/><circle cx="4" cy="4" r="1.5" fill="#f8e040"/></svg>
<div class="ti" style="top:132.7px">Contours</div>
<div class="a" style="left:6.5px;top:144.2px;width:5px;height:0.8px;background:#b8b8b8"></div>
<svg class="ic" style="top:140.5px" width="8" height="8"><path d="M0.5 2.5h5v5h-5z" fill="#f4f000" stroke="#222" stroke-width="0.8"/><path d="M0.5 2.5l2 -2h5v5l-2 2M5.5 2.5l2 -2" stroke="#222" stroke-width="0.8" fill="#e8d800"/></svg>
<div class="ti" style="top:140.7px">Solids</div>
<div class="a" style="left:6.5px;top:152.2px;width:5px;height:0.8px;background:#b8b8b8"></div>
<svg class="ic" style="top:148.5px" width="8" height="8"><rect x="0" y="0" width="8" height="8" fill="#f8f080"/><path d="M1 1l2 3l-2 3M7 1l-2 3l2 3M1 1h2M5 1h2M1 7h2M5 7h2" stroke="#111" stroke-width="1" fill="none"/></svg>
<div class="ti" style="top:148.7px">Composite Surfaces</div>
<div class="a" style="left:6.5px;top:160.2px;width:5px;height:0.8px;background:#b8b8b8"></div>
<svg class="ic" style="top:156.5px" width="8" height="8"><rect x="0" y="0" width="8" height="8" fill="#f8f080"/><path d="M1.5 8v-5l3 -2h3" stroke="#e01010" stroke-width="1.4" fill="none"/><path d="M1.5 8v-2" stroke="#111" stroke-width="1.4"/></svg>
<div class="ti" style="top:156.7px">Relabels</div>
<div class="a" style="left:6.5px;top:168.2px;width:5px;height:0.8px;background:#b8b8b8"></div>
<svg class="ic" style="top:164.5px" width="8" height="8"><rect x="0" y="1.5" width="8" height="5" fill="#222"/><rect x="1" y="2.5" width="6" height="3" fill="#f4f000"/><path d="M2 3.5h1M4 4.5h1M6 3.5h1" stroke="#111" stroke-width="0.8"/></svg>
<div class="ti" style="top:164.7px">Graphs</div>
<div class="a" style="left:6.5px;top:176.2px;width:5px;height:0.8px;background:#b8b8b8"></div>
<svg class="ic" style="top:172.5px" width="8" height="8"><rect x="0" y="0" width="8" height="8" fill="#f8f080"/><path d="M1 7l1 -2M3 2l1 -1M6 1.5l1 0.5M6.5 5l0.5 1" stroke="#111" stroke-width="1"/></svg>
<div class="ti" style="top:172.7px">Knotlists</div>
<div class="a" style="left:6.5px;top:184.2px;width:5px;height:0.8px;background:#b8b8b8"></div>
<svg class="ic" style="top:180.5px" width="8" height="8"><rect x="0" y="0" width="8" height="8" fill="#f8f080"/><path d="M0.5 2.5l3 3M3.5 2.5l-3 3M4.5 3.2h3M4.5 4.8h3" stroke="#111" stroke-width="0.9"/></svg>
<div class="ti" style="top:180.7px">Variables &amp; Formulas</div>
<div class="a" style="left:6.5px;top:192.2px;width:5px;height:0.8px;background:#b8b8b8"></div>
<svg class="ic" style="top:188.5px" width="8" height="8"><rect x="0" y="0" width="8" height="8" fill="#f8f080"/><path d="M1 7.5l3 -7l3 7M2.2 5h3.6" stroke="#111" stroke-width="1.3" fill="none"/></svg>
<div class="ti" style="top:188.7px">Text Labels</div>
<div class="a" style="left:6.5px;top:200.2px;width:5px;height:0.8px;background:#b8b8b8"></div>
<svg class="ic" style="top:196.5px" width="8" height="8"><rect x="0" y="0" width="8" height="8" fill="#f8f080"/><path d="M1 3h6M1 5.5h6" stroke="#111" stroke-width="1.2"/></svg>
<div class="ti" style="top:196.7px">Solve Sets</div>
<div class="a" style="left:6.5px;top:208.2px;width:5px;height:0.8px;background:#b8b8b8"></div>
<svg class="ic" style="top:204.5px" width="8" height="8"><rect x="0" y="0" width="8" height="8" fill="#f8f080"/><rect x="1" y="0.5" width="6" height="7" fill="none" stroke="#222" stroke-width="0.8"/><path d="M2 2.5h4M2 4h4M2 5.5h4" stroke="#222" stroke-width="0.7"/></svg>
<div class="ti" style="top:204.7px">Entity Lists</div>
<svg class="a" style="left:5.5px;top:213.5px" width="7" height="6"><path d="M1 0.5l2.5 2.5l-2.5 2.5z" fill="#fff" stroke="#a8a8a8" stroke-width="0.8"/><path d="M4.2 3h2.3" stroke="#c0c0c0" stroke-width="0.8"/></svg>
<svg class="ic" style="top:212.5px" width="8" height="8"><path d="M4 0v8M0 4h8M1.2 1.2l5.6 5.6M6.8 1.2l-5.6 5.6" stroke="#111" stroke-width="0.9"/><circle cx="4" cy="4" r="2.2" fill="#f4f000"/></svg>
<div class="ti" style="top:212.7px">System</div>
<svg class="a" style="left:5.5px;top:221.5px" width="7" height="6"><path d="M1 0.5l2.5 2.5l-2.5 2.5z" fill="#fff" stroke="#a8a8a8" stroke-width="0.8"/><path d="M4.2 3h2.3" stroke="#c0c0c0" stroke-width="0.8"/></svg>
<svg class="ic" style="top:220.5px" width="8" height="8"><rect x="1" y="1" width="5" height="6.5" fill="#fff" stroke="#222" stroke-width="0.8"/><path d="M0 1l2 1.5M5 6l3 -1" stroke="#e02020" stroke-width="1.1"/><path d="M3 3l3 1" stroke="#20b020" stroke-width="1.2"/></svg>
<div class="ti" style="top:220.7px">No Dependents</div>

<!-- Properties -->
<div class="hdr" style="top:281.5px"><span class="htx" style="transform:scaleX(0.88)">Properties</span><svg class="hx"><path d="M0.5 0.5 L4.5 4.5 M4.5 0.5 L0.5 4.5" stroke="#111" stroke-width="1.3"/></svg></div>
<div class="a" style="left:0;top:291.2px;width:111px;height:1.1px;background:#787878"></div>
<div class="a" style="left:0;top:293px;width:1.2px;height:106px;background:#8c8c8c"></div>
<div class="a" style="left:1.5px;top:292.5px;width:107px;height:9px;background:#f2f2f2;border-top:1px solid #fff;border-bottom:1px solid #b8b8b8"></div>
<div class="a" style="left:101px;top:293px;width:7px;height:8px;background:#f4f4f4;border:0.8px solid #c0c0c0"></div>
<svg class="a" style="left:102px;top:293.5px" width="6" height="7"><path d="M1.5 2.2 C1.5 0.3 4.8 0.3 4.8 2.2 C4.8 3.3 3.2 3.5 3.2 4.8" stroke="#5a4a00" stroke-width="1.3" fill="none"/><path d="M1.5 2.2 C1.5 0.5 4.6 0.5 4.6 2.2 C4.6 3.2 3.2 3.5 3.2 4.6" stroke="#e8d000" stroke-width="0.6" fill="none"/><rect x="2.4" y="5.3" width="1.6" height="1.4" fill="#5a4a00"/></svg>

<!-- Selection set -->
<div class="hdr" style="top:401.4px"><span class="htx" style="transform:scaleX(0.85)">Selection Set</span><svg class="hx"><path d="M0.5 0.5 L4.5 4.5 M4.5 0.5 L0.5 4.5" stroke="#111" stroke-width="1.3"/></svg></div>
<div class="a" style="left:0;top:411.2px;width:111px;height:1.1px;background:#787878"></div>
<div class="a" style="left:0;top:413px;width:1.2px;height:100px;background:#8c8c8c"></div>
<div class="btn" style="left:4px"></div><div class="btn" style="left:16px"></div><div class="btn" style="left:28.5px"></div><div class="btn" style="left:41px"></div><div class="btn" style="left:53px"></div>
<svg class="a" style="left:0;top:413px" width="112" height="12">
<path d="M6.5 3v6M8 3v6M9.5 3v6" stroke="#b0b0b0" stroke-width="0.8"/><path d="M12 3v6M11 4.2l1 -1.2l1 1.2M11 7.8l1 1.2l1 -1.2" stroke="#555" stroke-width="0.6" fill="none"/>
<path d="M21 9V4.5M19 6.5l2 -2.5l2 2.5" stroke="#222" stroke-width="1.3" fill="none"/>
<path d="M33.5 3v4.5M31.5 5.5l2 2.5l2 -2.5" stroke="#222" stroke-width="1.3" fill="none"/>
<path d="M43 3l6 6M49 3l-6 6" stroke="#d04040" stroke-width="0.9"/>
<rect x="54.5" y="2" width="7" height="7.5" fill="#e8e8f4" stroke="#5060c0" stroke-width="0.9"/><path d="M55 2.5l6 6.5M61 2.5l-6 6.5" stroke="#e03030" stroke-width="1"/>
</svg>
<div class="a" style="left:65px;top:414.8px;font-size:6.2px;color:#000;white-space:nowrap;transform:scaleX(0.88);transform-origin:0 0">0 Entities</div>
<div class="a" style="left:3px;top:424px;width:106.5px;height:82px;background:#fff;border:1px solid #a8a8a8"></div>
<div class="a" style="left:4px;top:425px;width:104.5px;height:12.5px;background:linear-gradient(#fafafa,#ececec);border-bottom:1.5px solid #c8c8c8"></div>
<div class="a" style="left:75.5px;top:425px;width:1px;height:11px;background:#c8c8c8"></div>
<div class="a" style="left:7px;top:428px;font-size:6.2px;color:#000;transform:scaleX(0.9);transform-origin:0 0">Name</div>
<div class="a" style="left:78px;top:428px;font-size:6.2px;color:#000;transform:scaleX(0.9);transform-origin:0 0">Type</div>
<!-- scrollbar -->
<div class="a" style="left:3px;top:506px;width:106.5px;height:7.5px;background:#f0f0f0"></div>
<div class="a" style="left:10.5px;top:506.5px;width:88px;height:6.5px;border:0.8px solid #a8a8a8;border-radius:1.5px;background:linear-gradient(#f4f4f4,#dcdcdc)"></div>
<svg class="a" style="left:3px;top:506px" width="107" height="8"><path d="M3.2 3.8l2 -1.8v3.6z M103.5 3.8l-2 -1.8v3.6z" fill="#222"/><path d="M51 2v3.5M53 2v3.5M55 2v3.5" stroke="#888" stroke-width="0.7"/></svg>
<div class="a" style="left:0;top:513px;width:114px;height:1px;background:#f0f0f0"></div>

<!-- status bar -->
<div class="a" style="left:0;top:514px;width:700px;height:11px;background:#f0f0f0"></div>
<div class="a" style="left:1.8px;top:517px;font-size:6.3px;color:#000;white-space:nowrap;transform:scaleX(0.9);transform-origin:0 0">For Help, press F1.</div>
<div class="sp" style="left:335.5px;width:138.5px">L0</div>
<div class="sp" style="left:476px;width:46px"></div>
<div class="sp" style="left:522px;width:40px">Lat -30.0</div>
<div class="sp" style="left:562px;width:38px">Lon 60.0</div>
<div class="sp" style="left:600px;width:54px">Radius 7.09</div>
<div class="sp" style="left:654px;width:46px">Tilt 0.0</div>
<div class="a" style="left:0;top:523.5px;width:700px;height:1.5px;background:#8a949e"></div>
<div class="a" style="left:60px;top:523.5px;width:16px;height:1.5px;background:#6a7fa0"></div>
</body></html>
